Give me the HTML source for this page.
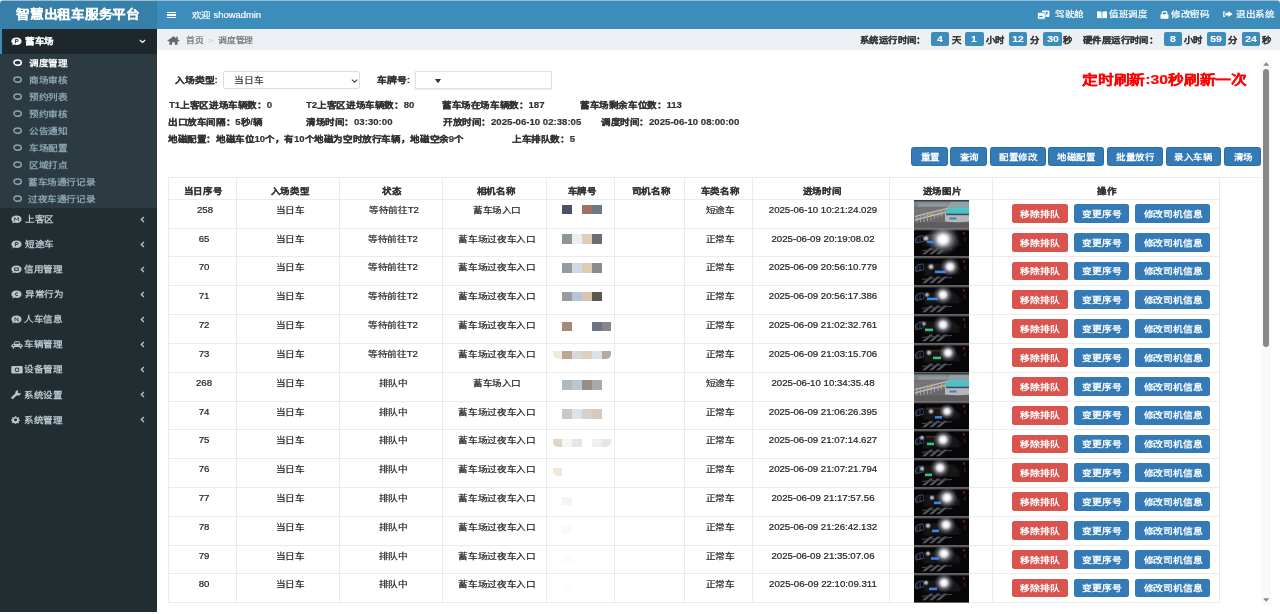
<!DOCTYPE html>
<html lang="zh-CN"><head><meta charset="utf-8"><title>调度管理</title>
<style>
*{box-sizing:border-box;margin:0;padding:0}
html,body{width:1280px;height:614px;overflow:hidden;background:#fff}
body{position:relative;font-family:"Liberation Sans",sans-serif;color:#333}
.abs{position:absolute}
.tx{position:absolute;height:20px;line-height:20px;white-space:nowrap}
</style></head><body>
<svg width="0" height="0" style="position:absolute"><defs><radialGradient id="hl"><stop offset="0" stop-color="#fff"/><stop offset="0.35" stop-color="#dcdce4"/><stop offset="0.65" stop-color="#8a8a98" stop-opacity="0.6"/><stop offset="1" stop-color="#505060" stop-opacity="0"/></radialGradient><filter id="b05" x="-20%" y="-20%" width="140%" height="140%"><feGaussianBlur stdDeviation="0.45"/></filter><filter id="b1" x="-50%" y="-50%" width="200%" height="200%"><feGaussianBlur stdDeviation="1"/></filter></defs></svg>
<div class="abs" style="left:0;top:0;width:157px;height:29px;background:#367fa9"></div>
<div class="abs" style="left:157px;top:0;width:1123px;height:29px;background:#3c8dbc"></div>
<div class="abs" style="left:0;top:0;width:1280px;height:1px;background:#9bbbd0"></div>
<div class="abs" style="left:167px;top:11.8px;width:9px;height:1.4px;background:#fff"></div>
<div class="abs" style="left:167px;top:14.2px;width:9px;height:1.4px;background:#fff"></div>
<div class="abs" style="left:167px;top:16.6px;width:9px;height:1.4px;background:#fff"></div>
<svg class="abs" style="left:1037px;top:10px" width="13" height="10" viewBox="0 0 13 10"><rect x="5" y="0.6" width="7.4" height="6.4" rx="1" fill="#fff"/><rect x="9" y="1.8" width="1.6" height="2.6" fill="#3c8dbc"/><rect x="0.6" y="2.6" width="7.6" height="6.6" rx="1" fill="#fff" stroke="#3c8dbc" stroke-width="0.7"/><rect x="2.2" y="5.9" width="3.4" height="1.2" fill="#3c8dbc"/></svg>
<svg class="abs" style="left:1097px;top:11px" width="10" height="8" viewBox="0 0 10 8"><path d="M0 0.5 Q2.5 0 4.6 0.8 L4.6 7.3 Q2.5 6.6 0 7.2 Z M5.4 0.8 Q7.5 0 10 0.5 L10 7.2 Q7.5 6.6 5.4 7.3 Z" fill="#fff"/></svg>
<svg class="abs" style="left:1159.8px;top:10.8px" width="9" height="8" viewBox="0 0 9 8"><path d="M2.1 3.6 V2.7 A2.4 2.4 0 0 1 6.9 2.7 V3.6" fill="none" stroke="#fff" stroke-width="1.3"/><rect x="0.5" y="3.3" width="8" height="4.4" rx="0.8" fill="#fff"/></svg>
<svg class="abs" style="left:1222.7px;top:11.4px" width="10" height="6.2" viewBox="0 0 10 6.2"><path d="M0.2 0.2 H2.2 V1.1 H1.4 V5.1 H2.2 V6 H0.2 Z" fill="#fff"/><path d="M2.4 1.8 H5.4 V0.1 L9.6 3.1 L5.4 6.1 V4.4 H2.4 Z" fill="#fff"/></svg>
<svg class="abs" style="left:0;top:0" width="4" height="4"><path d="M0 0 H4 Q0 0 0 4 Z" fill="#fff"/></svg>
<svg class="abs" style="left:1276px;top:0" width="4" height="4"><path d="M0 0 H4 V4 Q4 0 0 0 Z" fill="#fff"/></svg>
<div class="abs" style="left:0;top:29px;width:157px;height:583px;background:#222d32"></div>
<div class="abs" style="left:0;top:29px;width:157px;height:25px;background:#1e282c"></div>
<div class="abs" style="left:0;top:29px;width:1.5px;height:25px;background:#3c8dbc"></div>
<div class="abs" style="left:0;top:54px;width:157px;height:154px;background:#2c3b41"></div>
<svg class="abs" style="left:10.6px;top:37.0px" width="11" height="9" viewBox="0 0 11 9"><path d="M5.5 0.5 C8.6 0.5 10.6 2 10.6 4.2 C10.6 6.4 8.6 7.9 5.5 7.9 C4.8 7.9 4.1 7.8 3.5 7.6 L1.2 8.5 L1.9 6.8 C0.9 6.1 0.4 5.2 0.4 4.2 C0.4 2 2.4 0.5 5.5 0.5 Z" fill="#fff"/><path d="M4.4 6.2 V2.4 H6 Q7.2 2.4 7.2 3.4 Q7.2 4.4 6 4.4 H4.4" fill="none" stroke="#1e282c" stroke-width="0.9"/></svg>
<svg class="abs" style="left:138.8px;top:39px" width="7" height="5" viewBox="0 0 7 5"><path d="M0.9 1 L3.5 3.4 L6.1 1" fill="none" stroke="#fff" stroke-width="1.2"/></svg>
<svg class="abs" style="left:13px;top:58.90px" width="9.2" height="7.2" viewBox="0 0 9.2 7.2"><ellipse cx="4.6" cy="3.6" rx="3.65" ry="2.65" fill="none" stroke="#fff" stroke-width="1.55"/></svg>
<svg class="abs" style="left:13px;top:75.90px" width="9.2" height="7.2" viewBox="0 0 9.2 7.2"><ellipse cx="4.6" cy="3.6" rx="3.65" ry="2.65" fill="none" stroke="#8aa4af" stroke-width="1.55"/></svg>
<svg class="abs" style="left:13px;top:92.90px" width="9.2" height="7.2" viewBox="0 0 9.2 7.2"><ellipse cx="4.6" cy="3.6" rx="3.65" ry="2.65" fill="none" stroke="#8aa4af" stroke-width="1.55"/></svg>
<svg class="abs" style="left:13px;top:109.90px" width="9.2" height="7.2" viewBox="0 0 9.2 7.2"><ellipse cx="4.6" cy="3.6" rx="3.65" ry="2.65" fill="none" stroke="#8aa4af" stroke-width="1.55"/></svg>
<svg class="abs" style="left:13px;top:126.90px" width="9.2" height="7.2" viewBox="0 0 9.2 7.2"><ellipse cx="4.6" cy="3.6" rx="3.65" ry="2.65" fill="none" stroke="#8aa4af" stroke-width="1.55"/></svg>
<svg class="abs" style="left:13px;top:143.90px" width="9.2" height="7.2" viewBox="0 0 9.2 7.2"><ellipse cx="4.6" cy="3.6" rx="3.65" ry="2.65" fill="none" stroke="#8aa4af" stroke-width="1.55"/></svg>
<svg class="abs" style="left:13px;top:160.90px" width="9.2" height="7.2" viewBox="0 0 9.2 7.2"><ellipse cx="4.6" cy="3.6" rx="3.65" ry="2.65" fill="none" stroke="#8aa4af" stroke-width="1.55"/></svg>
<svg class="abs" style="left:13px;top:177.90px" width="9.2" height="7.2" viewBox="0 0 9.2 7.2"><ellipse cx="4.6" cy="3.6" rx="3.65" ry="2.65" fill="none" stroke="#8aa4af" stroke-width="1.55"/></svg>
<svg class="abs" style="left:13px;top:194.90px" width="9.2" height="7.2" viewBox="0 0 9.2 7.2"><ellipse cx="4.6" cy="3.6" rx="3.65" ry="2.65" fill="none" stroke="#8aa4af" stroke-width="1.55"/></svg>
<svg class="abs" style="left:10.6px;top:215.3px" width="11" height="9" viewBox="0 0 11 9"><path d="M5.5 0.5 C8.6 0.5 10.6 2 10.6 4.2 C10.6 6.4 8.6 7.9 5.5 7.9 C4.8 7.9 4.1 7.8 3.5 7.6 L1.2 8.5 L1.9 6.8 C0.9 6.1 0.4 5.2 0.4 4.2 C0.4 2 2.4 0.5 5.5 0.5 Z" fill="#b8c7ce"/><path d="M3.6 6 V2.6 L5.5 4.6 L7.4 2.6 V6" fill="none" stroke="#222d32" stroke-width="0.8"/></svg>
<svg class="abs" style="left:139.5px;top:216.1px" width="5" height="7" viewBox="0 0 5 7"><path d="M3.9 1 L1.3 3.5 L3.9 6" fill="none" stroke="#b8c7ce" stroke-width="1.3"/></svg>
<svg class="abs" style="left:10.6px;top:240.3px" width="11" height="9" viewBox="0 0 11 9"><path d="M5.5 0.5 C8.6 0.5 10.6 2 10.6 4.2 C10.6 6.4 8.6 7.9 5.5 7.9 C4.8 7.9 4.1 7.8 3.5 7.6 L1.2 8.5 L1.9 6.8 C0.9 6.1 0.4 5.2 0.4 4.2 C0.4 2 2.4 0.5 5.5 0.5 Z" fill="#b8c7ce"/><path d="M4.4 6.2 V2.4 H6 Q7.2 2.4 7.2 3.4 Q7.2 4.4 6 4.4 H4.4" fill="none" stroke="#222d32" stroke-width="0.9"/></svg>
<svg class="abs" style="left:139.5px;top:241.1px" width="5" height="7" viewBox="0 0 5 7"><path d="M3.9 1 L1.3 3.5 L3.9 6" fill="none" stroke="#b8c7ce" stroke-width="1.3"/></svg>
<svg class="abs" style="left:10.6px;top:265.3px" width="11" height="9" viewBox="0 0 11 9"><path d="M5.5 0.5 C8.6 0.5 10.6 2 10.6 4.2 C10.6 6.4 8.6 7.9 5.5 7.9 C4.8 7.9 4.1 7.8 3.5 7.6 L1.2 8.5 L1.9 6.8 C0.9 6.1 0.4 5.2 0.4 4.2 C0.4 2 2.4 0.5 5.5 0.5 Z" fill="#b8c7ce"/><rect x="3.6" y="3" width="3.8" height="2.4" fill="none" stroke="#222d32" stroke-width="0.9"/></svg>
<svg class="abs" style="left:139.5px;top:266.1px" width="5" height="7" viewBox="0 0 5 7"><path d="M3.9 1 L1.3 3.5 L3.9 6" fill="none" stroke="#b8c7ce" stroke-width="1.3"/></svg>
<svg class="abs" style="left:10.6px;top:290.4px" width="11" height="9" viewBox="0 0 11 9"><path d="M5.5 0.5 C8.6 0.5 10.6 2 10.6 4.2 C10.6 6.4 8.6 7.9 5.5 7.9 C4.8 7.9 4.1 7.8 3.5 7.6 L1.2 8.5 L1.9 6.8 C0.9 6.1 0.4 5.2 0.4 4.2 C0.4 2 2.4 0.5 5.5 0.5 Z" fill="#b8c7ce"/><path d="M7 3 Q4.2 2.2 4.2 4.3 Q4.2 6.2 7 5.6" fill="none" stroke="#222d32" stroke-width="0.9"/></svg>
<svg class="abs" style="left:139.5px;top:291.2px" width="5" height="7" viewBox="0 0 5 7"><path d="M3.9 1 L1.3 3.5 L3.9 6" fill="none" stroke="#b8c7ce" stroke-width="1.3"/></svg>
<svg class="abs" style="left:10.6px;top:315.4px" width="11" height="9" viewBox="0 0 11 9"><path d="M5.5 0.5 C8.6 0.5 10.6 2 10.6 4.2 C10.6 6.4 8.6 7.9 5.5 7.9 C4.8 7.9 4.1 7.8 3.5 7.6 L1.2 8.5 L1.9 6.8 C0.9 6.1 0.4 5.2 0.4 4.2 C0.4 2 2.4 0.5 5.5 0.5 Z" fill="#b8c7ce"/><path d="M4 6.2 V2.5 L7 6.2 V2.5" fill="none" stroke="#222d32" stroke-width="0.8"/></svg>
<svg class="abs" style="left:139.5px;top:316.2px" width="5" height="7" viewBox="0 0 5 7"><path d="M3.9 1 L1.3 3.5 L3.9 6" fill="none" stroke="#b8c7ce" stroke-width="1.3"/></svg>
<svg class="abs" style="left:10.5px;top:340.7px" width="12" height="8" viewBox="0 0 12 8"><path d="M2.4 3 L3.4 0.8 Q3.7 0.3 4.3 0.3 H7.7 Q8.3 0.3 8.6 0.8 L9.6 3 Q11.6 3.3 11.6 4.6 V6 H10.4 V7.6 H8.6 V6 H3.4 V7.6 H1.6 V6 H0.4 V4.6 Q0.4 3.3 2.4 3 Z" fill="#b8c7ce"/><path d="M3.4 2.8 L4.1 1.2 H7.9 L8.6 2.8 Z" fill="#222d32"/><circle cx="2.6" cy="4.5" r="0.8" fill="#222d32"/><circle cx="9.4" cy="4.5" r="0.8" fill="#222d32"/></svg>
<svg class="abs" style="left:139.5px;top:341.2px" width="5" height="7" viewBox="0 0 5 7"><path d="M3.9 1 L1.3 3.5 L3.9 6" fill="none" stroke="#b8c7ce" stroke-width="1.3"/></svg>
<svg class="abs" style="left:10.8px;top:365.1px" width="12" height="9" viewBox="0 0 12 9"><rect x="0.3" y="1" width="11.4" height="7.6" rx="1" fill="#b8c7ce"/><circle cx="6" cy="4.8" r="2.3" fill="#222d32"/><circle cx="6" cy="4.8" r="1.4" fill="#b8c7ce"/></svg>
<svg class="abs" style="left:139.5px;top:366.2px" width="5" height="7" viewBox="0 0 5 7"><path d="M3.9 1 L1.3 3.5 L3.9 6" fill="none" stroke="#b8c7ce" stroke-width="1.3"/></svg>
<svg class="abs" style="left:10.8px;top:390.4px" width="10" height="9" viewBox="0 0 10 9"><path d="M1.4 7.8 L5.6 3.9" stroke="#b8c7ce" stroke-width="2.3" stroke-linecap="round"/><circle cx="7" cy="2.9" r="2.7" fill="#b8c7ce"/><path d="M7.2 -0.5 L10.5 2.2 L8.6 3.6 L6.8 2.4 Z" fill="#222d32"/></svg>
<svg class="abs" style="left:139.5px;top:391.2px" width="5" height="7" viewBox="0 0 5 7"><path d="M3.9 1 L1.3 3.5 L3.9 6" fill="none" stroke="#b8c7ce" stroke-width="1.3"/></svg>
<svg class="abs" style="left:10.9px;top:416.0px" width="9" height="8" viewBox="0 0 9 8"><g transform="scale(1,0.86)"><path d="M3.8 0.3 H5.2 L5.5 1.5 L6.4 1.9 L7.5 1.2 L8.3 2.2 L7.6 3.2 L7.9 4.1 L8.9 4.3 V5.7 L7.9 5.9 L7.5 6.8 L8.1 7.8 L7.1 8.6 L6.2 8 L5.3 8.4 L5.1 8.9 H3.7 L3.5 8.3 L2.6 7.9 L1.7 8.5 L0.7 7.6 L1.3 6.7 L1 5.8 L0.1 5.6 V4.2 L1.1 4 L1.5 3.1 L0.9 2.2 L1.8 1.3 L2.7 1.9 L3.6 1.5 Z" fill="#b8c7ce"/><circle cx="4.5" cy="4.5" r="1.6" fill="#222d32"/></g></svg>
<svg class="abs" style="left:139.5px;top:416.3px" width="5" height="7" viewBox="0 0 5 7"><path d="M3.9 1 L1.3 3.5 L3.9 6" fill="none" stroke="#b8c7ce" stroke-width="1.3"/></svg>
<div class="abs" style="left:157px;top:29px;width:1123px;height:20.5px;background:#ecf0f5"></div>
<svg class="abs" style="left:167.3px;top:35.6px" width="13" height="9" viewBox="0 0 13 9"><path d="M6.5 0.2 L12.8 4.8 L11.6 5.5 L10.6 4.8 V8.8 H7.9 V6.2 H5.1 V8.8 H2.4 V4.8 L1.4 5.5 L0.2 4.8 Z" fill="#666"/><rect x="9.2" y="0.6" width="1.5" height="2.6" fill="#666"/></svg>
<div class="abs" style="left:931.1px;top:32.1px;width:18.2px;height:13.9px;background:#3c8dbc;border-radius:2px"></div>
<div class="abs" style="left:965.2px;top:32.1px;width:18.5px;height:13.9px;background:#3c8dbc;border-radius:2px"></div>
<div class="abs" style="left:1009.0px;top:32.1px;width:18.0px;height:13.9px;background:#3c8dbc;border-radius:2px"></div>
<div class="abs" style="left:1043.4px;top:32.1px;width:18.4px;height:13.9px;background:#3c8dbc;border-radius:2px"></div>
<div class="abs" style="left:1163.5px;top:32.1px;width:18.5px;height:13.9px;background:#3c8dbc;border-radius:2px"></div>
<div class="abs" style="left:1207.0px;top:32.1px;width:18.9px;height:13.9px;background:#3c8dbc;border-radius:2px"></div>
<div class="abs" style="left:1241.5px;top:32.1px;width:18.8px;height:13.9px;background:#3c8dbc;border-radius:2px"></div>
<div class="abs" style="left:222.5px;top:71px;width:137px;height:18.3px;border:1px solid #dcdcdc;border-radius:2.5px"></div>
<svg class="abs" style="left:350.5px;top:78.5px" width="7" height="4" viewBox="0 0 7 4"><path d="M0.8 0.6 L3.5 3.2 L6.2 0.6" fill="none" stroke="#444" stroke-width="1.1"/></svg>
<div class="abs" style="left:415.3px;top:70.6px;width:137px;height:18.7px;border:1px solid #e0e0e0;box-shadow:0 1px 1px rgba(0,0,0,0.06)"></div>
<svg class="abs" style="left:434.8px;top:78.8px" width="6" height="4.4" viewBox="0 0 6 4.4"><path d="M0 0 H6 L3 4.4 Z" fill="#333"/></svg>
<div class="abs" style="left:910.9px;top:146.8px;width:36.7px;height:19px;background:#337ab7;border:0.6px solid #2e6da4;border-radius:2.5px"></div>
<div class="abs" style="left:950.3px;top:146.8px;width:36.5px;height:19px;background:#337ab7;border:0.6px solid #2e6da4;border-radius:2.5px"></div>
<div class="abs" style="left:990.1px;top:146.8px;width:55.5px;height:19px;background:#337ab7;border:0.6px solid #2e6da4;border-radius:2.5px"></div>
<div class="abs" style="left:1048.2px;top:146.8px;width:55.4px;height:19px;background:#337ab7;border:0.6px solid #2e6da4;border-radius:2.5px"></div>
<div class="abs" style="left:1107.0px;top:146.8px;width:55.5px;height:19px;background:#337ab7;border:0.6px solid #2e6da4;border-radius:2.5px"></div>
<div class="abs" style="left:1165.5px;top:146.8px;width:55.3px;height:19px;background:#337ab7;border:0.6px solid #2e6da4;border-radius:2.5px"></div>
<div class="abs" style="left:1224.1px;top:146.8px;width:36.5px;height:19px;background:#337ab7;border:0.6px solid #2e6da4;border-radius:2.5px"></div>
<div class="abs" style="left:168px;top:177px;width:1093px;height:1px;background:#ebebeb"></div>
<div class="abs" style="left:168px;top:199px;width:1052px;height:1px;background:#ebebeb"></div>
<div class="abs" style="left:168px;top:228px;width:1052px;height:1px;background:#ebebeb"></div>
<div class="abs" style="left:168px;top:256px;width:1052px;height:1px;background:#ebebeb"></div>
<div class="abs" style="left:168px;top:285px;width:1052px;height:1px;background:#ebebeb"></div>
<div class="abs" style="left:168px;top:314px;width:1052px;height:1px;background:#ebebeb"></div>
<div class="abs" style="left:168px;top:343px;width:1052px;height:1px;background:#ebebeb"></div>
<div class="abs" style="left:168px;top:372px;width:1052px;height:1px;background:#ebebeb"></div>
<div class="abs" style="left:168px;top:401px;width:1052px;height:1px;background:#ebebeb"></div>
<div class="abs" style="left:168px;top:429px;width:1052px;height:1px;background:#ebebeb"></div>
<div class="abs" style="left:168px;top:458px;width:1052px;height:1px;background:#ebebeb"></div>
<div class="abs" style="left:168px;top:487px;width:1052px;height:1px;background:#ebebeb"></div>
<div class="abs" style="left:168px;top:516px;width:1052px;height:1px;background:#ebebeb"></div>
<div class="abs" style="left:168px;top:545px;width:1052px;height:1px;background:#ebebeb"></div>
<div class="abs" style="left:168px;top:573px;width:1052px;height:1px;background:#ebebeb"></div>
<div class="abs" style="left:168px;top:602px;width:1052px;height:1px;background:#ebebeb"></div>
<div class="abs" style="left:168px;top:177px;width:1px;height:426px;background:#ebebeb"></div>
<div class="abs" style="left:236px;top:177px;width:1px;height:426px;background:#ebebeb"></div>
<div class="abs" style="left:339px;top:177px;width:1px;height:426px;background:#ebebeb"></div>
<div class="abs" style="left:442px;top:177px;width:1px;height:426px;background:#ebebeb"></div>
<div class="abs" style="left:546px;top:177px;width:1px;height:426px;background:#ebebeb"></div>
<div class="abs" style="left:614px;top:177px;width:1px;height:426px;background:#ebebeb"></div>
<div class="abs" style="left:684px;top:177px;width:1px;height:426px;background:#ebebeb"></div>
<div class="abs" style="left:752px;top:177px;width:1px;height:426px;background:#ebebeb"></div>
<div class="abs" style="left:889px;top:177px;width:1px;height:426px;background:#ebebeb"></div>
<div class="abs" style="left:992px;top:177px;width:1px;height:426px;background:#ebebeb"></div>
<div class="abs" style="left:1219px;top:177px;width:1px;height:426px;background:#ebebeb"></div>
<div class="abs" style="left:562px;top:205.0px;width:10px;height:9.0px;background:#4a5164"></div>
<div class="abs" style="left:582px;top:205.0px;width:10px;height:9.0px;background:#9a7565"></div>
<div class="abs" style="left:592px;top:205.0px;width:10px;height:9.0px;background:#6b7985"></div>
<svg class="abs" style="left:914px;top:200.0px" width="55" height="28.6" viewBox="0 0 55 29.4" preserveAspectRatio="none"><rect width="55" height="29.4" fill="#6a6a6c"/><rect y="1.3" width="55" height="6" fill="#7a8088"/><rect x="4" y="3.5" width="30" height="3" fill="#9aa0a8" filter="url(#b1)"/><path d="M0 9 L55 6 L55 14 L0 19 Z" fill="#767474"/><g filter="url(#b05)"><path d="M1 17 L34 8.5 M1 20.5 L34 12" stroke="#c8c8cc" stroke-width="1.2"/><path d="M3 15.5 V25 M6.5 14.5 V24 M10 13.5 V23 M13.5 12.6 V22 M17 11.7 V21 M20.5 10.8 V19.5 M24 10 V18 M27.5 9.5 V17 M31 9 V15" stroke="#a8a8b0" stroke-width="0.9"/><path d="M12 16 L19 14.5 M26 13 L31 12" stroke="#c8a040" stroke-width="1.1"/></g><rect y="23" width="55" height="6.4" fill="#5e5c5c"/><g filter="url(#b05)"><path d="M31 14 L33 8.5 L36 3 Q37 2 39 2 L53 2 Q55 2 55 4 L55 22 Q44 23.5 31 22 Z" fill="#b4b8bc"/><path d="M36 3 Q37 2 39 2 L53 2 Q55 2 55 4 L55 8.5 L33.5 8.5 Z" fill="#8aa4aa"/><path d="M33.5 8.5 L55 8.5 L55 14 L31 14 Z" fill="#42c6ca"/><rect x="32" y="14" width="23" height="1.6" fill="#40484e"/><rect x="35.5" y="18" width="7" height="2" fill="#3a82c0"/></g><rect width="55" height="1.4" fill="#3a3c40"/></svg>
<div class="abs" style="left:1012.1px;top:204.10px;width:55.8px;height:18.8px;background:#d9534f;border-radius:2.5px"></div>
<div class="abs" style="left:1073.7px;top:204.10px;width:55.8px;height:18.8px;background:#337ab7;border-radius:2.5px"></div>
<div class="abs" style="left:1135.1px;top:204.10px;width:75px;height:18.8px;background:#337ab7;border-radius:2.5px"></div>
<div class="abs" style="left:562px;top:233.9px;width:10px;height:9.8px;background:#8e9597"></div>
<div class="abs" style="left:572px;top:233.9px;width:10px;height:9.8px;background:#eceef2"></div>
<div class="abs" style="left:582px;top:233.9px;width:10px;height:9.8px;background:#e0cdb5"></div>
<div class="abs" style="left:592px;top:233.9px;width:10px;height:9.8px;background:#6d6c74"></div>
<svg class="abs" style="left:914px;top:229.0px" width="55" height="27.6" viewBox="0 0 55 29.4" preserveAspectRatio="none"><rect width="55" height="29.4" fill="#070709"/><rect width="55" height="1.4" fill="#5a5a5a"/><rect x="12" y="6" width="26" height="3" fill="#8a5a24" opacity="0.8" filter="url(#b05)"/><g filter="url(#b05)"><path d="M1 11 L4 8 L9 7 L10 13 L2 15 Z" fill="none" stroke="#56648a" stroke-width="0.8"/><path d="M3 9 V14 M6 8.5 V14" stroke="#56648a" stroke-width="0.7"/></g><path d="M10 7 L40 6 L46 12 L46 18 L10 19 Z" fill="#121216" filter="url(#b1)"/><circle cx="29" cy="11" r="17.0" fill="url(#hl)" opacity="0.85"/><circle cx="29" cy="11" r="5.0" fill="#fff" opacity="1.0" filter="url(#b1)"/><circle cx="12" cy="10" r="4.25" fill="url(#hl)" opacity="0.68"/><circle cx="12" cy="10" r="1.25" fill="#fff" opacity="0.8" filter="url(#b1)"/><rect x="13" y="12.5" width="8" height="2.6" fill="#3a7fe0" filter="url(#b05)"/><path d="M8 27 L16 20 L19.5 20 L11.5 27 Z M15 27 L23 20 L26.5 20 L18.5 27 Z M22 27 L30 20 L33.5 20 L25.5 27 Z" fill="#55575f" filter="url(#b05)"/><path d="M8 23 L38 21" stroke="#44464f" stroke-width="1"/><rect x="49" y="3" width="2" height="3" fill="#6a1420" filter="url(#b05)"/><rect x="50" y="9" width="1.6" height="4" fill="#501018" filter="url(#b05)"/></svg>
<div class="abs" style="left:1012.1px;top:233.20px;width:55.8px;height:18.8px;background:#d9534f;border-radius:2.5px"></div>
<div class="abs" style="left:1073.7px;top:233.20px;width:55.8px;height:18.8px;background:#337ab7;border-radius:2.5px"></div>
<div class="abs" style="left:1135.1px;top:233.20px;width:75px;height:18.8px;background:#337ab7;border-radius:2.5px"></div>
<div class="abs" style="left:562px;top:263.1px;width:10px;height:9.5px;background:#959c9e"></div>
<div class="abs" style="left:572px;top:263.1px;width:10px;height:9.5px;background:#d3dae2"></div>
<div class="abs" style="left:582px;top:263.1px;width:10px;height:9.5px;background:#dfcbb3"></div>
<div class="abs" style="left:592px;top:263.1px;width:10px;height:9.5px;background:#8c8b8a"></div>
<svg class="abs" style="left:914px;top:257.0px" width="55" height="28.6" viewBox="0 0 55 29.4" preserveAspectRatio="none"><rect width="55" height="29.4" fill="#070709"/><rect width="55" height="1.4" fill="#5a5a5a"/><g filter="url(#b05)"><path d="M1 11 L4 8 L9 7 L10 13 L2 15 Z" fill="none" stroke="#56648a" stroke-width="0.8"/><path d="M3 9 V14 M6 8.5 V14" stroke="#56648a" stroke-width="0.7"/></g><path d="M10 7 L40 6 L46 12 L46 18 L10 19 Z" fill="#121216" filter="url(#b1)"/><circle cx="36" cy="10" r="10.2" fill="url(#hl)" opacity="0.85"/><circle cx="36" cy="10" r="3.0" fill="#fff" opacity="1.0" filter="url(#b1)"/><circle cx="17" cy="10" r="4.25" fill="url(#hl)" opacity="0.68"/><circle cx="17" cy="10" r="1.25" fill="#fff" opacity="0.8" filter="url(#b1)"/><rect x="21" y="14" width="11" height="2.6" fill="#3a86f0" filter="url(#b05)"/><path d="M8 27 L16 20 L19.5 20 L11.5 27 Z M15 27 L23 20 L26.5 20 L18.5 27 Z M22 27 L30 20 L33.5 20 L25.5 27 Z" fill="#55575f" filter="url(#b05)"/><path d="M8 23 L38 21" stroke="#44464f" stroke-width="1"/><rect x="49" y="3" width="2" height="3" fill="#6a1420" filter="url(#b05)"/><rect x="50" y="9" width="1.6" height="4" fill="#501018" filter="url(#b05)"/></svg>
<div class="abs" style="left:1012.1px;top:261.60px;width:55.8px;height:18.8px;background:#d9534f;border-radius:2.5px"></div>
<div class="abs" style="left:1073.7px;top:261.60px;width:55.8px;height:18.8px;background:#337ab7;border-radius:2.5px"></div>
<div class="abs" style="left:1135.1px;top:261.60px;width:75px;height:18.8px;background:#337ab7;border-radius:2.5px"></div>
<div class="abs" style="left:562px;top:291.8px;width:10px;height:9.5px;background:#9a9ca0"></div>
<div class="abs" style="left:572px;top:291.8px;width:10px;height:9.5px;background:#b5c4d6"></div>
<div class="abs" style="left:582px;top:291.8px;width:10px;height:9.5px;background:#dbc5ae"></div>
<div class="abs" style="left:592px;top:291.8px;width:10px;height:9.5px;background:#5c584f"></div>
<svg class="abs" style="left:914px;top:286.0px" width="55" height="28.6" viewBox="0 0 55 29.4" preserveAspectRatio="none"><rect width="55" height="29.4" fill="#070709"/><rect width="55" height="1.4" fill="#5a5a5a"/><g filter="url(#b05)"><path d="M1 11 L4 8 L9 7 L10 13 L2 15 Z" fill="none" stroke="#56648a" stroke-width="0.8"/><path d="M3 9 V14 M6 8.5 V14" stroke="#56648a" stroke-width="0.7"/></g><path d="M10 7 L40 6 L46 12 L46 18 L10 19 Z" fill="#121216" filter="url(#b1)"/><circle cx="29" cy="9" r="10.2" fill="url(#hl)" opacity="0.85"/><circle cx="29" cy="9" r="3.0" fill="#fff" opacity="1.0" filter="url(#b1)"/><circle cx="13" cy="9" r="3.4" fill="url(#hl)" opacity="0.595"/><circle cx="13" cy="9" r="1.0" fill="#fff" opacity="0.7" filter="url(#b1)"/><rect x="13" y="12" width="11" height="2.6" fill="#3a86f0" filter="url(#b05)"/><path d="M8 27 L16 20 L19.5 20 L11.5 27 Z M15 27 L23 20 L26.5 20 L18.5 27 Z M22 27 L30 20 L33.5 20 L25.5 27 Z" fill="#55575f" filter="url(#b05)"/><path d="M8 23 L38 21" stroke="#44464f" stroke-width="1"/><rect x="49" y="3" width="2" height="3" fill="#6a1420" filter="url(#b05)"/><rect x="50" y="9" width="1.6" height="4" fill="#501018" filter="url(#b05)"/></svg>
<div class="abs" style="left:1012.1px;top:290.40px;width:55.8px;height:18.8px;background:#d9534f;border-radius:2.5px"></div>
<div class="abs" style="left:1073.7px;top:290.40px;width:55.8px;height:18.8px;background:#337ab7;border-radius:2.5px"></div>
<div class="abs" style="left:1135.1px;top:290.40px;width:75px;height:18.8px;background:#337ab7;border-radius:2.5px"></div>
<div class="abs" style="left:562px;top:322.1px;width:10px;height:8.8px;background:#a48b78"></div>
<div class="abs" style="left:592px;top:322.1px;width:10px;height:8.8px;background:#6b7583"></div>
<div class="abs" style="left:602px;top:322.1px;width:9px;height:8.8px;background:#87858b"></div>
<svg class="abs" style="left:914px;top:315.0px" width="55" height="28.6" viewBox="0 0 55 29.4" preserveAspectRatio="none"><rect width="55" height="29.4" fill="#070709"/><rect width="55" height="1.4" fill="#5a5a5a"/><g filter="url(#b05)"><path d="M1 11 L4 8 L9 7 L10 13 L2 15 Z" fill="none" stroke="#56648a" stroke-width="0.8"/><path d="M3 9 V14 M6 8.5 V14" stroke="#56648a" stroke-width="0.7"/></g><path d="M10 7 L40 6 L46 12 L46 18 L10 19 Z" fill="#121216" filter="url(#b1)"/><circle cx="29" cy="10" r="10.2" fill="url(#hl)" opacity="0.85"/><circle cx="29" cy="10" r="3.0" fill="#fff" opacity="1.0" filter="url(#b1)"/><circle cx="10" cy="9" r="3.4" fill="url(#hl)" opacity="0.51"/><circle cx="10" cy="9" r="1.0" fill="#fff" opacity="0.6" filter="url(#b1)"/><rect x="11" y="14" width="8" height="2.6" fill="#40c080" filter="url(#b05)"/><path d="M8 27 L16 20 L19.5 20 L11.5 27 Z M15 27 L23 20 L26.5 20 L18.5 27 Z M22 27 L30 20 L33.5 20 L25.5 27 Z" fill="#55575f" filter="url(#b05)"/><path d="M8 23 L38 21" stroke="#44464f" stroke-width="1"/><rect x="49" y="3" width="2" height="3" fill="#6a1420" filter="url(#b05)"/><rect x="50" y="9" width="1.6" height="4" fill="#501018" filter="url(#b05)"/></svg>
<div class="abs" style="left:1012.1px;top:319.20px;width:55.8px;height:18.8px;background:#d9534f;border-radius:2.5px"></div>
<div class="abs" style="left:1073.7px;top:319.20px;width:55.8px;height:18.8px;background:#337ab7;border-radius:2.5px"></div>
<div class="abs" style="left:1135.1px;top:319.20px;width:75px;height:18.8px;background:#337ab7;border-radius:2.5px"></div>
<div class="abs" style="left:553px;top:351.1px;width:9px;height:7.5px;background:#f3ebe0;border-bottom-left-radius:5px"></div>
<div class="abs" style="left:562px;top:351.1px;width:10px;height:7.5px;background:#bba998"></div>
<div class="abs" style="left:572px;top:351.1px;width:10px;height:7.5px;background:#d8d8d6"></div>
<div class="abs" style="left:582px;top:351.1px;width:10px;height:7.5px;background:#dfcfbb"></div>
<div class="abs" style="left:592px;top:351.1px;width:10px;height:7.5px;background:#dde0e5"></div>
<div class="abs" style="left:602px;top:351.1px;width:9px;height:7.5px;background:#b5a89c;border-bottom-right-radius:5px"></div>
<svg class="abs" style="left:914px;top:344.0px" width="55" height="28.6" viewBox="0 0 55 29.4" preserveAspectRatio="none"><rect width="55" height="29.4" fill="#070709"/><rect width="55" height="1.4" fill="#5a5a5a"/><rect x="12" y="6" width="26" height="3" fill="#8a5a24" opacity="0.8" filter="url(#b05)"/><g filter="url(#b05)"><path d="M1 11 L4 8 L9 7 L10 13 L2 15 Z" fill="none" stroke="#56648a" stroke-width="0.8"/><path d="M3 9 V14 M6 8.5 V14" stroke="#56648a" stroke-width="0.7"/></g><path d="M10 7 L40 6 L46 12 L46 18 L10 19 Z" fill="#121216" filter="url(#b1)"/><circle cx="34" cy="9" r="9.35" fill="url(#hl)" opacity="0.85"/><circle cx="34" cy="9" r="2.75" fill="#fff" opacity="1.0" filter="url(#b1)"/><circle cx="15" cy="9" r="3.74" fill="url(#hl)" opacity="0.68"/><circle cx="15" cy="9" r="1.1" fill="#fff" opacity="0.8" filter="url(#b1)"/><rect x="19" y="13" width="8" height="2.6" fill="#40c080" filter="url(#b05)"/><path d="M8 27 L16 20 L19.5 20 L11.5 27 Z M15 27 L23 20 L26.5 20 L18.5 27 Z M22 27 L30 20 L33.5 20 L25.5 27 Z" fill="#55575f" filter="url(#b05)"/><path d="M8 23 L38 21" stroke="#44464f" stroke-width="1"/><rect x="49" y="3" width="2" height="3" fill="#6a1420" filter="url(#b05)"/><rect x="50" y="9" width="1.6" height="4" fill="#501018" filter="url(#b05)"/></svg>
<div class="abs" style="left:1012.1px;top:348.10px;width:55.8px;height:18.8px;background:#d9534f;border-radius:2.5px"></div>
<div class="abs" style="left:1073.7px;top:348.10px;width:55.8px;height:18.8px;background:#337ab7;border-radius:2.5px"></div>
<div class="abs" style="left:1135.1px;top:348.10px;width:75px;height:18.8px;background:#337ab7;border-radius:2.5px"></div>
<div class="abs" style="left:562px;top:380.0px;width:10px;height:9.8px;background:#b3b8bc"></div>
<div class="abs" style="left:572px;top:380.0px;width:10px;height:9.8px;background:#b9c7d5"></div>
<div class="abs" style="left:582px;top:380.0px;width:10px;height:9.8px;background:#9a8c80"></div>
<div class="abs" style="left:592px;top:380.0px;width:10px;height:9.8px;background:#a9a9a9"></div>
<svg class="abs" style="left:914px;top:373.0px" width="55" height="28.6" viewBox="0 0 55 29.4" preserveAspectRatio="none"><rect width="55" height="29.4" fill="#6a6a6c"/><rect y="1.3" width="55" height="6" fill="#7a8088"/><rect x="4" y="3.5" width="30" height="3" fill="#9aa0a8" filter="url(#b1)"/><path d="M0 9 L55 6 L55 14 L0 19 Z" fill="#767474"/><g filter="url(#b05)"><path d="M1 17 L34 8.5 M1 20.5 L34 12" stroke="#c8c8cc" stroke-width="1.2"/><path d="M3 15.5 V25 M6.5 14.5 V24 M10 13.5 V23 M13.5 12.6 V22 M17 11.7 V21 M20.5 10.8 V19.5 M24 10 V18 M27.5 9.5 V17 M31 9 V15" stroke="#a8a8b0" stroke-width="0.9"/><path d="M12 16 L19 14.5 M26 13 L31 12" stroke="#c8a040" stroke-width="1.1"/></g><rect y="23" width="55" height="6.4" fill="#5e5c5c"/><g filter="url(#b05)"><path d="M31 14 L33 8.5 L36 3 Q37 2 39 2 L53 2 Q55 2 55 4 L55 22 Q44 23.5 31 22 Z" fill="#b4b8bc"/><path d="M36 3 Q37 2 39 2 L53 2 Q55 2 55 4 L55 8.5 L33.5 8.5 Z" fill="#8aa4aa"/><path d="M33.5 8.5 L55 8.5 L55 14 L31 14 Z" fill="#42c6ca"/><rect x="32" y="14" width="23" height="1.6" fill="#40484e"/><rect x="35.5" y="18" width="7" height="2" fill="#3a82c0"/></g><rect width="55" height="1.4" fill="#3a3c40"/></svg>
<div class="abs" style="left:1012.1px;top:377.20px;width:55.8px;height:18.8px;background:#d9534f;border-radius:2.5px"></div>
<div class="abs" style="left:1073.7px;top:377.20px;width:55.8px;height:18.8px;background:#337ab7;border-radius:2.5px"></div>
<div class="abs" style="left:1135.1px;top:377.20px;width:75px;height:18.8px;background:#337ab7;border-radius:2.5px"></div>
<div class="abs" style="left:562px;top:409.0px;width:10px;height:9.8px;background:#c8c8c8"></div>
<div class="abs" style="left:572px;top:409.0px;width:10px;height:9.8px;background:#dde3ea"></div>
<div class="abs" style="left:582px;top:409.0px;width:10px;height:9.8px;background:#d8cfcc"></div>
<div class="abs" style="left:592px;top:409.0px;width:10px;height:9.8px;background:#d6c8bd"></div>
<svg class="abs" style="left:914px;top:402.0px" width="55" height="27.6" viewBox="0 0 55 29.4" preserveAspectRatio="none"><rect width="55" height="29.4" fill="#070709"/><rect width="55" height="1.4" fill="#5a5a5a"/><rect x="12" y="6" width="26" height="3" fill="#8a5a24" opacity="0.8" filter="url(#b05)"/><g filter="url(#b05)"><path d="M1 11 L4 8 L9 7 L10 13 L2 15 Z" fill="none" stroke="#56648a" stroke-width="0.8"/><path d="M3 9 V14 M6 8.5 V14" stroke="#56648a" stroke-width="0.7"/></g><path d="M10 7 L40 6 L46 12 L46 18 L10 19 Z" fill="#121216" filter="url(#b1)"/><circle cx="33" cy="10" r="8.5" fill="url(#hl)" opacity="0.85"/><circle cx="33" cy="10" r="2.5" fill="#fff" opacity="1.0" filter="url(#b1)"/><circle cx="17" cy="10" r="3.74" fill="url(#hl)" opacity="0.68"/><circle cx="17" cy="10" r="1.1" fill="#fff" opacity="0.8" filter="url(#b1)"/><rect x="21" y="15" width="7" height="2.6" fill="#3a86f0" filter="url(#b05)"/><path d="M8 27 L16 20 L19.5 20 L11.5 27 Z M15 27 L23 20 L26.5 20 L18.5 27 Z M22 27 L30 20 L33.5 20 L25.5 27 Z" fill="#55575f" filter="url(#b05)"/><path d="M8 23 L38 21" stroke="#44464f" stroke-width="1"/><rect x="49" y="3" width="2" height="3" fill="#6a1420" filter="url(#b05)"/><rect x="50" y="9" width="1.6" height="4" fill="#501018" filter="url(#b05)"/></svg>
<div class="abs" style="left:1012.1px;top:406.00px;width:55.8px;height:18.8px;background:#d9534f;border-radius:2.5px"></div>
<div class="abs" style="left:1073.7px;top:406.00px;width:55.8px;height:18.8px;background:#337ab7;border-radius:2.5px"></div>
<div class="abs" style="left:1135.1px;top:406.00px;width:75px;height:18.8px;background:#337ab7;border-radius:2.5px"></div>
<div class="abs" style="left:553px;top:439.0px;width:9px;height:8.0px;background:#e0d5c8;border-bottom-left-radius:5px"></div>
<div class="abs" style="left:562px;top:439.0px;width:10px;height:8.0px;background:#f8f6f2"></div>
<div class="abs" style="left:572px;top:439.0px;width:10px;height:8.0px;background:#e5e5e7"></div>
<div class="abs" style="left:592px;top:439.0px;width:10px;height:8.0px;background:#efeff2"></div>
<div class="abs" style="left:602px;top:439.0px;width:9px;height:8.0px;background:#e3e5ea;border-bottom-right-radius:5px"></div>
<svg class="abs" style="left:914px;top:430.0px" width="55" height="28.6" viewBox="0 0 55 29.4" preserveAspectRatio="none"><rect width="55" height="29.4" fill="#070709"/><rect width="55" height="1.4" fill="#5a5a5a"/><rect x="12" y="6" width="26" height="3" fill="#8a5a24" opacity="0.8" filter="url(#b05)"/><g filter="url(#b05)"><path d="M1 11 L4 8 L9 7 L10 13 L2 15 Z" fill="none" stroke="#56648a" stroke-width="0.8"/><path d="M3 9 V14 M6 8.5 V14" stroke="#56648a" stroke-width="0.7"/></g><path d="M10 7 L40 6 L46 12 L46 18 L10 19 Z" fill="#121216" filter="url(#b1)"/><circle cx="29" cy="10" r="10.2" fill="url(#hl)" opacity="0.85"/><circle cx="29" cy="10" r="3.0" fill="#fff" opacity="1.0" filter="url(#b1)"/><circle cx="8" cy="8" r="3.4" fill="url(#hl)" opacity="0.595"/><circle cx="8" cy="8" r="1.0" fill="#fff" opacity="0.7" filter="url(#b1)"/><rect x="13" y="13" width="7" height="2.6" fill="#40c080" filter="url(#b05)"/><path d="M8 27 L16 20 L19.5 20 L11.5 27 Z M15 27 L23 20 L26.5 20 L18.5 27 Z M22 27 L30 20 L33.5 20 L25.5 27 Z" fill="#55575f" filter="url(#b05)"/><path d="M8 23 L38 21" stroke="#44464f" stroke-width="1"/><rect x="49" y="3" width="2" height="3" fill="#6a1420" filter="url(#b05)"/><rect x="50" y="9" width="1.6" height="4" fill="#501018" filter="url(#b05)"/></svg>
<div class="abs" style="left:1012.1px;top:434.50px;width:55.8px;height:18.8px;background:#d9534f;border-radius:2.5px"></div>
<div class="abs" style="left:1073.7px;top:434.50px;width:55.8px;height:18.8px;background:#337ab7;border-radius:2.5px"></div>
<div class="abs" style="left:1135.1px;top:434.50px;width:75px;height:18.8px;background:#337ab7;border-radius:2.5px"></div>
<div class="abs" style="left:553px;top:468.0px;width:9px;height:8.0px;background:#efe6dc;border-bottom-left-radius:5px"></div>
<svg class="abs" style="left:914px;top:459.0px" width="55" height="28.6" viewBox="0 0 55 29.4" preserveAspectRatio="none"><rect width="55" height="29.4" fill="#070709"/><rect width="55" height="1.4" fill="#5a5a5a"/><g filter="url(#b05)"><path d="M1 11 L4 8 L9 7 L10 13 L2 15 Z" fill="none" stroke="#56648a" stroke-width="0.8"/><path d="M3 9 V14 M6 8.5 V14" stroke="#56648a" stroke-width="0.7"/></g><path d="M10 7 L40 6 L46 12 L46 18 L10 19 Z" fill="#121216" filter="url(#b1)"/><circle cx="26" cy="9" r="10.2" fill="url(#hl)" opacity="0.85"/><circle cx="26" cy="9" r="3.0" fill="#fff" opacity="1.0" filter="url(#b1)"/><circle cx="8" cy="10" r="3.4" fill="url(#hl)" opacity="0.68"/><circle cx="8" cy="10" r="1.0" fill="#fff" opacity="0.8" filter="url(#b1)"/><rect x="11" y="15" width="7" height="2.6" fill="#40c080" filter="url(#b05)"/><path d="M8 27 L16 20 L19.5 20 L11.5 27 Z M15 27 L23 20 L26.5 20 L18.5 27 Z M22 27 L30 20 L33.5 20 L25.5 27 Z" fill="#55575f" filter="url(#b05)"/><path d="M8 23 L38 21" stroke="#44464f" stroke-width="1"/><rect x="49" y="3" width="2" height="3" fill="#6a1420" filter="url(#b05)"/><rect x="50" y="9" width="1.6" height="4" fill="#501018" filter="url(#b05)"/></svg>
<div class="abs" style="left:1012.1px;top:463.20px;width:55.8px;height:18.8px;background:#d9534f;border-radius:2.5px"></div>
<div class="abs" style="left:1073.7px;top:463.20px;width:55.8px;height:18.8px;background:#337ab7;border-radius:2.5px"></div>
<div class="abs" style="left:1135.1px;top:463.20px;width:75px;height:18.8px;background:#337ab7;border-radius:2.5px"></div>
<div class="abs" style="left:562px;top:496.9px;width:10px;height:8.0px;background:#f7f5f2"></div>
<svg class="abs" style="left:914px;top:488.0px" width="55" height="28.6" viewBox="0 0 55 29.4" preserveAspectRatio="none"><rect width="55" height="29.4" fill="#070709"/><rect width="55" height="1.4" fill="#5a5a5a"/><g filter="url(#b05)"><path d="M1 11 L4 8 L9 7 L10 13 L2 15 Z" fill="none" stroke="#56648a" stroke-width="0.8"/><path d="M3 9 V14 M6 8.5 V14" stroke="#56648a" stroke-width="0.7"/></g><path d="M10 7 L40 6 L46 12 L46 18 L10 19 Z" fill="#121216" filter="url(#b1)"/><circle cx="33" cy="10" r="11.049999999999999" fill="url(#hl)" opacity="0.85"/><circle cx="33" cy="10" r="3.25" fill="#fff" opacity="1.0" filter="url(#b1)"/><circle cx="18" cy="10" r="3.4" fill="url(#hl)" opacity="0.68"/><circle cx="18" cy="10" r="1.0" fill="#fff" opacity="0.8" filter="url(#b1)"/><rect x="20" y="14" width="7" height="2.6" fill="#3a86f0" filter="url(#b05)"/><path d="M8 27 L16 20 L19.5 20 L11.5 27 Z M15 27 L23 20 L26.5 20 L18.5 27 Z M22 27 L30 20 L33.5 20 L25.5 27 Z" fill="#55575f" filter="url(#b05)"/><path d="M8 23 L38 21" stroke="#44464f" stroke-width="1"/><rect x="49" y="3" width="2" height="3" fill="#6a1420" filter="url(#b05)"/><rect x="50" y="9" width="1.6" height="4" fill="#501018" filter="url(#b05)"/></svg>
<div class="abs" style="left:1012.1px;top:492.10px;width:55.8px;height:18.8px;background:#d9534f;border-radius:2.5px"></div>
<div class="abs" style="left:1073.7px;top:492.10px;width:55.8px;height:18.8px;background:#337ab7;border-radius:2.5px"></div>
<div class="abs" style="left:1135.1px;top:492.10px;width:75px;height:18.8px;background:#337ab7;border-radius:2.5px"></div>
<div class="abs" style="left:562px;top:526.0px;width:10px;height:8.0px;background:#fafaf9"></div>
<svg class="abs" style="left:914px;top:517.0px" width="55" height="28.6" viewBox="0 0 55 29.4" preserveAspectRatio="none"><rect width="55" height="29.4" fill="#070709"/><rect width="55" height="1.4" fill="#5a5a5a"/><g filter="url(#b05)"><path d="M1 11 L4 8 L9 7 L10 13 L2 15 Z" fill="none" stroke="#56648a" stroke-width="0.8"/><path d="M3 9 V14 M6 8.5 V14" stroke="#56648a" stroke-width="0.7"/></g><path d="M10 7 L40 6 L46 12 L46 18 L10 19 Z" fill="#121216" filter="url(#b1)"/><circle cx="32" cy="8" r="10.2" fill="url(#hl)" opacity="0.85"/><circle cx="32" cy="8" r="3.0" fill="#fff" opacity="1.0" filter="url(#b1)"/><circle cx="14" cy="9" r="3.74" fill="url(#hl)" opacity="0.68"/><circle cx="14" cy="9" r="1.1" fill="#fff" opacity="0.8" filter="url(#b1)"/><rect x="18" y="13" width="7" height="2.6" fill="#3a86f0" filter="url(#b05)"/><path d="M8 27 L16 20 L19.5 20 L11.5 27 Z M15 27 L23 20 L26.5 20 L18.5 27 Z M22 27 L30 20 L33.5 20 L25.5 27 Z" fill="#55575f" filter="url(#b05)"/><path d="M8 23 L38 21" stroke="#44464f" stroke-width="1"/><rect x="49" y="3" width="2" height="3" fill="#6a1420" filter="url(#b05)"/><rect x="50" y="9" width="1.6" height="4" fill="#501018" filter="url(#b05)"/></svg>
<div class="abs" style="left:1012.1px;top:521.20px;width:55.8px;height:18.8px;background:#d9534f;border-radius:2.5px"></div>
<div class="abs" style="left:1073.7px;top:521.20px;width:55.8px;height:18.8px;background:#337ab7;border-radius:2.5px"></div>
<div class="abs" style="left:1135.1px;top:521.20px;width:75px;height:18.8px;background:#337ab7;border-radius:2.5px"></div>
<div class="abs" style="left:562px;top:555.1px;width:10px;height:8.0px;background:#fcfcfc"></div>
<svg class="abs" style="left:914px;top:546.0px" width="55" height="27.6" viewBox="0 0 55 29.4" preserveAspectRatio="none"><rect width="55" height="29.4" fill="#070709"/><rect width="55" height="1.4" fill="#5a5a5a"/><g filter="url(#b05)"><path d="M1 11 L4 8 L9 7 L10 13 L2 15 Z" fill="none" stroke="#56648a" stroke-width="0.8"/><path d="M3 9 V14 M6 8.5 V14" stroke="#56648a" stroke-width="0.7"/></g><path d="M10 7 L40 6 L46 12 L46 18 L10 19 Z" fill="#121216" filter="url(#b1)"/><circle cx="30" cy="8" r="11.049999999999999" fill="url(#hl)" opacity="0.85"/><circle cx="30" cy="8" r="3.25" fill="#fff" opacity="1.0" filter="url(#b1)"/><circle cx="14" cy="8" r="3.4" fill="url(#hl)" opacity="0.68"/><circle cx="14" cy="8" r="1.0" fill="#fff" opacity="0.8" filter="url(#b1)"/><rect x="17" y="12" width="8" height="2.6" fill="#3a86f0" filter="url(#b05)"/><path d="M8 27 L16 20 L19.5 20 L11.5 27 Z M15 27 L23 20 L26.5 20 L18.5 27 Z M22 27 L30 20 L33.5 20 L25.5 27 Z" fill="#55575f" filter="url(#b05)"/><path d="M8 23 L38 21" stroke="#44464f" stroke-width="1"/><rect x="49" y="3" width="2" height="3" fill="#6a1420" filter="url(#b05)"/><rect x="50" y="9" width="1.6" height="4" fill="#501018" filter="url(#b05)"/></svg>
<div class="abs" style="left:1012.1px;top:550.30px;width:55.8px;height:18.8px;background:#d9534f;border-radius:2.5px"></div>
<div class="abs" style="left:1073.7px;top:550.30px;width:55.8px;height:18.8px;background:#337ab7;border-radius:2.5px"></div>
<div class="abs" style="left:1135.1px;top:550.30px;width:75px;height:18.8px;background:#337ab7;border-radius:2.5px"></div>
<div class="abs" style="left:562px;top:583.5px;width:10px;height:8.0px;background:#fdfdfd"></div>
<svg class="abs" style="left:914px;top:574.0px" width="55" height="28.6" viewBox="0 0 55 29.4" preserveAspectRatio="none"><rect width="55" height="29.4" fill="#070709"/><rect width="55" height="1.4" fill="#5a5a5a"/><g filter="url(#b05)"><path d="M1 11 L4 8 L9 7 L10 13 L2 15 Z" fill="none" stroke="#56648a" stroke-width="0.8"/><path d="M3 9 V14 M6 8.5 V14" stroke="#56648a" stroke-width="0.7"/></g><path d="M10 7 L40 6 L46 12 L46 18 L10 19 Z" fill="#121216" filter="url(#b1)"/><circle cx="30" cy="9" r="10.2" fill="url(#hl)" opacity="0.85"/><circle cx="30" cy="9" r="3.0" fill="#fff" opacity="1.0" filter="url(#b1)"/><circle cx="12" cy="9" r="3.4" fill="url(#hl)" opacity="0.68"/><circle cx="12" cy="9" r="1.0" fill="#fff" opacity="0.8" filter="url(#b1)"/><rect x="15" y="14" width="8" height="2.6" fill="#3a86f0" filter="url(#b05)"/><path d="M8 27 L16 20 L19.5 20 L11.5 27 Z M15 27 L23 20 L26.5 20 L18.5 27 Z M22 27 L30 20 L33.5 20 L25.5 27 Z" fill="#55575f" filter="url(#b05)"/><path d="M8 23 L38 21" stroke="#44464f" stroke-width="1"/><rect x="49" y="3" width="2" height="3" fill="#6a1420" filter="url(#b05)"/><rect x="50" y="9" width="1.6" height="4" fill="#501018" filter="url(#b05)"/></svg>
<div class="abs" style="left:1012.1px;top:578.70px;width:55.8px;height:18.8px;background:#d9534f;border-radius:2.5px"></div>
<div class="abs" style="left:1073.7px;top:578.70px;width:55.8px;height:18.8px;background:#337ab7;border-radius:2.5px"></div>
<div class="abs" style="left:1135.1px;top:578.70px;width:75px;height:18.8px;background:#337ab7;border-radius:2.5px"></div>
<div class="abs" style="left:1261px;top:60px;width:10px;height:544.5px;background:#f9f9f9"></div>
<svg class="abs" style="left:1262.8px;top:61.8px" width="6.4" height="4" viewBox="0 0 6.4 4"><path d="M0 3.8 L3.2 0.2 L6.4 3.8 Z" fill="#888"/></svg>
<svg class="abs" style="left:1262.8px;top:598px" width="6.4" height="4" viewBox="0 0 6.4 4"><path d="M0 0.2 L3.2 3.8 L6.4 0.2 Z" fill="#888"/></svg>
<div class="abs" style="left:1263px;top:68.8px;width:6px;height:278px;background:#888;border-radius:3px"></div>
<div class="tx" style="left:-72.10px;top:4.92px;width:300px;text-align:center;transform-origin:50% 50%;font-size:14px;transform:scale(0.9769,0.8600);font-weight:bold;-webkit-text-stroke:0.2px #fff;color:#fff">智慧出租车服务平台</div>
<div class="tx" style="left:192.05px;top:4.58px;transform-origin:0 50%;font-size:10px;transform:scale(0.9420,0.8500);color:#fff;-webkit-text-stroke:0.2px #fff">欢迎 showadmin</div>
<div class="tx" style="left:1054.83px;top:4.35px;transform-origin:0 50%;font-size:10px;transform:scale(0.9569,0.8500);color:#fff;-webkit-text-stroke:0.25px #fff">驾驶舱</div>
<div class="tx" style="left:1109.20px;top:4.35px;transform-origin:0 50%;font-size:10px;transform:scale(0.9569,0.8500);color:#fff;-webkit-text-stroke:0.25px #fff">值班调度</div>
<div class="tx" style="left:1170.70px;top:4.35px;transform-origin:0 50%;font-size:10px;transform:scale(0.9569,0.8500);color:#fff;-webkit-text-stroke:0.25px #fff">修改密码</div>
<div class="tx" style="left:1235.62px;top:4.35px;transform-origin:0 50%;font-size:10px;transform:scale(0.9569,0.8500);color:#fff;-webkit-text-stroke:0.25px #fff">退出系统</div>
<div class="tx" style="left:24.77px;top:31.40px;transform-origin:0 50%;font-size:10px;transform:scale(0.9623,0.8500);font-weight:bold;-webkit-text-stroke:0.1px #fff;color:#fff">蓄车场</div>
<div class="tx" style="left:29.14px;top:52.53px;transform-origin:0 50%;font-size:10px;transform:scale(0.9621,0.8500);font-weight:bold;color:#fff">调度管理</div>
<div class="tx" style="left:29.14px;top:69.53px;transform-origin:0 50%;font-size:10px;transform:scale(0.9621,0.8500);font-weight:bold;color:#8aa4af">商场审核</div>
<div class="tx" style="left:29.14px;top:86.53px;transform-origin:0 50%;font-size:10px;transform:scale(0.9621,0.8500);font-weight:bold;color:#8aa4af">预约列表</div>
<div class="tx" style="left:29.14px;top:103.53px;transform-origin:0 50%;font-size:10px;transform:scale(0.9621,0.8500);font-weight:bold;color:#8aa4af">预约审核</div>
<div class="tx" style="left:29.39px;top:120.53px;transform-origin:0 50%;font-size:10px;transform:scale(0.9621,0.8500);font-weight:bold;color:#8aa4af">公告通知</div>
<div class="tx" style="left:29.14px;top:137.53px;transform-origin:0 50%;font-size:10px;transform:scale(0.9621,0.8500);font-weight:bold;color:#8aa4af">车场配置</div>
<div class="tx" style="left:29.14px;top:154.53px;transform-origin:0 50%;font-size:10px;transform:scale(0.9621,0.8500);font-weight:bold;color:#8aa4af">区域打点</div>
<div class="tx" style="left:28.41px;top:171.53px;transform-origin:0 50%;font-size:10px;transform:scale(0.9621,0.8500);font-weight:bold;color:#8aa4af">蓄车场通行记录</div>
<div class="tx" style="left:28.41px;top:188.53px;transform-origin:0 50%;font-size:10px;transform:scale(0.9621,0.8500);font-weight:bold;color:#8aa4af">过夜车通行记录</div>
<div class="tx" style="left:24.80px;top:209.36px;transform-origin:0 50%;font-size:10px;transform:scale(0.9569,0.8500);font-weight:bold;color:#b8c7ce">上客区</div>
<div class="tx" style="left:24.80px;top:234.38px;transform-origin:0 50%;font-size:10px;transform:scale(0.9569,0.8500);font-weight:bold;color:#b8c7ce">短途车</div>
<div class="tx" style="left:24.31px;top:259.40px;transform-origin:0 50%;font-size:10px;transform:scale(0.9569,0.8500);font-weight:bold;color:#b8c7ce">信用管理</div>
<div class="tx" style="left:24.56px;top:284.42px;transform-origin:0 50%;font-size:10px;transform:scale(0.9569,0.8500);font-weight:bold;color:#b8c7ce">异常行为</div>
<div class="tx" style="left:24.31px;top:309.44px;transform-origin:0 50%;font-size:10px;transform:scale(0.9569,0.8500);font-weight:bold;color:#b8c7ce">人车信息</div>
<div class="tx" style="left:24.31px;top:334.46px;transform-origin:0 50%;font-size:10px;transform:scale(0.9569,0.8500);font-weight:bold;color:#b8c7ce">车辆管理</div>
<div class="tx" style="left:24.31px;top:359.48px;transform-origin:0 50%;font-size:10px;transform:scale(0.9569,0.8500);font-weight:bold;color:#b8c7ce">设备管理</div>
<div class="tx" style="left:24.31px;top:384.50px;transform-origin:0 50%;font-size:10px;transform:scale(0.9569,0.8500);font-weight:bold;color:#b8c7ce">系统设置</div>
<div class="tx" style="left:24.31px;top:409.52px;transform-origin:0 50%;font-size:10px;transform:scale(0.9569,0.8500);font-weight:bold;color:#b8c7ce">系统管理</div>
<div class="tx" style="left:186.46px;top:30.18px;transform-origin:0 50%;font-size:9px;transform:scale(0.9772,0.8500);color:#666;-webkit-text-stroke:0.2px #666">首页</div>
<div class="tx" style="left:207.69px;top:30.18px;transform-origin:0 50%;font-size:9px;transform:scale(0.9772,0.8500);color:#bbb">&gt;</div>
<div class="tx" style="left:217.93px;top:30.18px;transform-origin:0 50%;font-size:9px;transform:scale(0.9772,0.8500);color:#666;-webkit-text-stroke:0.2px #666">调度管理</div>
<div class="tx" style="left:860.14px;top:29.51px;transform-origin:0 50%;font-size:10px;transform:scale(0.9383,0.8500);font-weight:bold;-webkit-text-stroke:0.15px #333">系统运行时间：</div>
<div class="tx" style="left:951.60px;top:29.51px;transform-origin:0 50%;font-size:10px;transform:scale(0.9383,0.8500);font-weight:bold;-webkit-text-stroke:0.15px #333">天</div>
<div class="tx" style="left:985.72px;top:29.51px;transform-origin:0 50%;font-size:10px;transform:scale(0.9383,0.8500);font-weight:bold;-webkit-text-stroke:0.15px #333">小时</div>
<div class="tx" style="left:1029.80px;top:29.51px;transform-origin:0 50%;font-size:10px;transform:scale(0.9383,0.8500);font-weight:bold;-webkit-text-stroke:0.15px #333">分</div>
<div class="tx" style="left:1063.20px;top:29.51px;transform-origin:0 50%;font-size:10px;transform:scale(0.9383,0.8500);font-weight:bold;-webkit-text-stroke:0.15px #333">秒</div>
<div class="tx" style="left:1083.17px;top:29.51px;transform-origin:0 50%;font-size:10px;transform:scale(0.9383,0.8500);font-weight:bold;-webkit-text-stroke:0.15px #333">硬件层运行时间：</div>
<div class="tx" style="left:1184.26px;top:29.51px;transform-origin:0 50%;font-size:10px;transform:scale(0.9383,0.8500);font-weight:bold;-webkit-text-stroke:0.15px #333">小时</div>
<div class="tx" style="left:1228.00px;top:29.51px;transform-origin:0 50%;font-size:10px;transform:scale(0.9383,0.8500);font-weight:bold;-webkit-text-stroke:0.15px #333">分</div>
<div class="tx" style="left:1262.20px;top:29.51px;transform-origin:0 50%;font-size:10px;transform:scale(0.9383,0.8500);font-weight:bold;-webkit-text-stroke:0.15px #333">秒</div>
<div class="tx" style="left:790.20px;top:29.30px;width:300px;text-align:center;transform-origin:50% 50%;font-size:11px;transform:scale(0.9500,0.8500);font-weight:bold;-webkit-text-stroke:0.1px #fff;color:#fff">4</div>
<div class="tx" style="left:824.45px;top:29.30px;width:300px;text-align:center;transform-origin:50% 50%;font-size:11px;transform:scale(0.9500,0.8500);font-weight:bold;-webkit-text-stroke:0.1px #fff;color:#fff">1</div>
<div class="tx" style="left:868.00px;top:29.30px;width:300px;text-align:center;transform-origin:50% 50%;font-size:11px;transform:scale(0.9500,0.8500);font-weight:bold;-webkit-text-stroke:0.1px #fff;color:#fff">12</div>
<div class="tx" style="left:902.60px;top:29.30px;width:300px;text-align:center;transform-origin:50% 50%;font-size:11px;transform:scale(0.9500,0.8500);font-weight:bold;-webkit-text-stroke:0.1px #fff;color:#fff">30</div>
<div class="tx" style="left:1022.75px;top:29.30px;width:300px;text-align:center;transform-origin:50% 50%;font-size:11px;transform:scale(0.9500,0.8500);font-weight:bold;-webkit-text-stroke:0.1px #fff;color:#fff">8</div>
<div class="tx" style="left:1066.45px;top:29.30px;width:300px;text-align:center;transform-origin:50% 50%;font-size:11px;transform:scale(0.9500,0.8500);font-weight:bold;-webkit-text-stroke:0.1px #fff;color:#fff">59</div>
<div class="tx" style="left:1100.90px;top:29.30px;width:300px;text-align:center;transform-origin:50% 50%;font-size:11px;transform:scale(0.9500,0.8500);font-weight:bold;-webkit-text-stroke:0.1px #fff;color:#fff">24</div>
<div class="tx" style="left:174.97px;top:70.34px;transform-origin:0 50%;font-size:10px;transform:scale(0.9883,0.8500);font-weight:bold;-webkit-text-stroke:0.2px #333">入场类型:</div>
<div class="tx" style="left:233.53px;top:70.26px;transform-origin:0 50%;font-size:10px;transform:scale(0.9794,0.8500);-webkit-text-stroke:0.2px #333">当日车</div>
<div class="tx" style="left:377.23px;top:70.34px;transform-origin:0 50%;font-size:10px;transform:scale(0.9883,0.8500);font-weight:bold;-webkit-text-stroke:0.2px #333">车牌号:</div>
<div class="tx" style="left:1081.58px;top:70.19px;transform-origin:0 50%;font-size:16px;transform:scale(0.9877,0.8100);font-weight:bold;-webkit-text-stroke:0.25px #f00;color:#f00">定时刷新:30秒刷新一次</div>
<div class="tx" style="left:168.56px;top:94.93px;transform-origin:0 50%;font-size:10px;transform:scale(0.9606,0.8500);font-weight:bold;-webkit-text-stroke:0.2px #333">T1上客区进场车辆数：0</div>
<div class="tx" style="left:305.81px;top:94.93px;transform-origin:0 50%;font-size:10px;transform:scale(0.9606,0.8500);font-weight:bold;-webkit-text-stroke:0.2px #333">T2上客区进场车辆数：80</div>
<div class="tx" style="left:442.39px;top:94.93px;transform-origin:0 50%;font-size:10px;transform:scale(0.9606,0.8500);font-weight:bold;-webkit-text-stroke:0.2px #333">蓄车场在场车辆数：187</div>
<div class="tx" style="left:580.49px;top:94.93px;transform-origin:0 50%;font-size:10px;transform:scale(0.9606,0.8500);font-weight:bold;-webkit-text-stroke:0.2px #333">蓄车场剩余车位数：113</div>
<div class="tx" style="left:168.11px;top:111.88px;transform-origin:0 50%;font-size:10px;transform:scale(0.9606,0.8500);font-weight:bold;-webkit-text-stroke:0.2px #333">出口放车间隔：5秒/辆</div>
<div class="tx" style="left:305.61px;top:111.88px;transform-origin:0 50%;font-size:10px;transform:scale(0.9606,0.8500);font-weight:bold;-webkit-text-stroke:0.2px #333">清场时间：03:30:00</div>
<div class="tx" style="left:442.83px;top:111.88px;transform-origin:0 50%;font-size:10px;transform:scale(0.9606,0.8500);font-weight:bold;-webkit-text-stroke:0.2px #333">开放时间：2025-06-10 02:38:05</div>
<div class="tx" style="left:601.29px;top:111.88px;transform-origin:0 50%;font-size:10px;transform:scale(0.9606,0.8500);font-weight:bold;-webkit-text-stroke:0.2px #333">调度时间：2025-06-10 08:00:00</div>
<div class="tx" style="left:168.49px;top:129.38px;transform-origin:0 50%;font-size:10px;transform:scale(0.9606,0.8500);font-weight:bold;-webkit-text-stroke:0.2px #333">地磁配置：地磁车位10个，有10个地磁为空时放行车辆，地磁空余9个</div>
<div class="tx" style="left:511.64px;top:129.38px;transform-origin:0 50%;font-size:10px;transform:scale(0.9606,0.8500);font-weight:bold;-webkit-text-stroke:0.2px #333">上车排队数：5</div>
<div class="tx" style="left:779.58px;top:147.02px;width:300px;text-align:center;transform-origin:50% 50%;font-size:10px;transform:scale(0.9500,0.8500);font-weight:bold;color:#fff">重置</div>
<div class="tx" style="left:818.88px;top:147.02px;width:300px;text-align:center;transform-origin:50% 50%;font-size:10px;transform:scale(0.9500,0.8500);font-weight:bold;color:#fff">查询</div>
<div class="tx" style="left:868.17px;top:147.02px;width:300px;text-align:center;transform-origin:50% 50%;font-size:10px;transform:scale(0.9500,0.8500);font-weight:bold;color:#fff">配置修改</div>
<div class="tx" style="left:926.23px;top:147.02px;width:300px;text-align:center;transform-origin:50% 50%;font-size:10px;transform:scale(0.9500,0.8500);font-weight:bold;color:#fff">地磁配置</div>
<div class="tx" style="left:985.08px;top:147.02px;width:300px;text-align:center;transform-origin:50% 50%;font-size:10px;transform:scale(0.9500,0.8500);font-weight:bold;color:#fff">批量放行</div>
<div class="tx" style="left:1043.48px;top:147.02px;width:300px;text-align:center;transform-origin:50% 50%;font-size:10px;transform:scale(0.9500,0.8500);font-weight:bold;color:#fff">录入车辆</div>
<div class="tx" style="left:1092.67px;top:147.02px;width:300px;text-align:center;transform-origin:50% 50%;font-size:10px;transform:scale(0.9500,0.8500);font-weight:bold;color:#fff">清场</div>
<div class="tx" style="left:53.27px;top:180.51px;width:300px;text-align:center;transform-origin:50% 50%;font-size:10px;transform:scale(0.9512,0.8500);font-weight:bold;-webkit-text-stroke:0.2px #333">当日序号</div>
<div class="tx" style="left:139.61px;top:180.51px;width:300px;text-align:center;transform-origin:50% 50%;font-size:10px;transform:scale(0.9512,0.8500);font-weight:bold;-webkit-text-stroke:0.2px #333">入场类型</div>
<div class="tx" style="left:242.47px;top:180.51px;width:300px;text-align:center;transform-origin:50% 50%;font-size:10px;transform:scale(0.9512,0.8500);font-weight:bold;-webkit-text-stroke:0.2px #333">状态</div>
<div class="tx" style="left:345.82px;top:180.51px;width:300px;text-align:center;transform-origin:50% 50%;font-size:10px;transform:scale(0.9512,0.8500);font-weight:bold;-webkit-text-stroke:0.2px #333">相机名称</div>
<div class="tx" style="left:431.87px;top:180.51px;width:300px;text-align:center;transform-origin:50% 50%;font-size:10px;transform:scale(0.9512,0.8500);font-weight:bold;-webkit-text-stroke:0.2px #333">车牌号</div>
<div class="tx" style="left:500.82px;top:180.51px;width:300px;text-align:center;transform-origin:50% 50%;font-size:10px;transform:scale(0.9512,0.8500);font-weight:bold;-webkit-text-stroke:0.2px #333">司机名称</div>
<div class="tx" style="left:569.52px;top:180.51px;width:300px;text-align:center;transform-origin:50% 50%;font-size:10px;transform:scale(0.9512,0.8500);font-weight:bold;-webkit-text-stroke:0.2px #333">车类名称</div>
<div class="tx" style="left:672.22px;top:180.51px;width:300px;text-align:center;transform-origin:50% 50%;font-size:10px;transform:scale(0.9512,0.8500);font-weight:bold;-webkit-text-stroke:0.2px #333">进场时间</div>
<div class="tx" style="left:792.37px;top:180.51px;width:300px;text-align:center;transform-origin:50% 50%;font-size:10px;transform:scale(0.9512,0.8500);font-weight:bold;-webkit-text-stroke:0.2px #333">进场图片</div>
<div class="tx" style="left:957.37px;top:180.51px;width:300px;text-align:center;transform-origin:50% 50%;font-size:10px;transform:scale(0.9512,0.8500);font-weight:bold;-webkit-text-stroke:0.2px #333">操作</div>
<div class="tx" style="left:54.55px;top:199.77px;width:300px;text-align:center;transform-origin:50% 50%;font-size:10px;transform:scale(0.9656,0.8500);color:#262626;-webkit-text-stroke:0.25px #262626">258</div>
<div class="tx" style="left:139.93px;top:199.77px;width:300px;text-align:center;transform-origin:50% 50%;font-size:10px;transform:scale(0.9656,0.8500);color:#262626;-webkit-text-stroke:0.25px #262626">当日车</div>
<div class="tx" style="left:243.58px;top:199.77px;width:300px;text-align:center;transform-origin:50% 50%;font-size:10px;transform:scale(0.9656,0.8500);color:#262626;-webkit-text-stroke:0.25px #262626">等待前往T2</div>
<div class="tx" style="left:346.57px;top:199.77px;width:300px;text-align:center;transform-origin:50% 50%;font-size:10px;transform:scale(0.9656,0.8500);color:#262626;-webkit-text-stroke:0.25px #262626">蓄车场入口</div>
<div class="tx" style="left:569.74px;top:199.77px;width:300px;text-align:center;transform-origin:50% 50%;font-size:10px;transform:scale(0.9656,0.8500);color:#262626;-webkit-text-stroke:0.25px #262626">短途车</div>
<div class="tx" style="left:672.97px;top:199.77px;width:300px;text-align:center;transform-origin:50% 50%;font-size:10px;transform:scale(0.9656,0.8500);color:#262626;-webkit-text-stroke:0.25px #262626">2025-06-10 10:21:24.029</div>
<div class="tx" style="left:890.00px;top:203.50px;width:300px;text-align:center;transform-origin:50% 50%;font-size:10px;transform:scale(0.9800,0.8500);font-weight:bold;color:#fff">移除排队</div>
<div class="tx" style="left:951.60px;top:203.50px;width:300px;text-align:center;transform-origin:50% 50%;font-size:10px;transform:scale(0.9800,0.8500);font-weight:bold;color:#fff">变更序号</div>
<div class="tx" style="left:1022.60px;top:203.50px;width:300px;text-align:center;transform-origin:50% 50%;font-size:10px;transform:scale(0.9800,0.8500);font-weight:bold;color:#fff">修改司机信息</div>
<div class="tx" style="left:54.31px;top:228.87px;width:300px;text-align:center;transform-origin:50% 50%;font-size:10px;transform:scale(0.9656,0.8500);color:#262626;-webkit-text-stroke:0.25px #262626">65</div>
<div class="tx" style="left:140.06px;top:228.87px;width:300px;text-align:center;transform-origin:50% 50%;font-size:10px;transform:scale(0.9656,0.8500);color:#262626;-webkit-text-stroke:0.25px #262626">当日车</div>
<div class="tx" style="left:243.22px;top:228.87px;width:300px;text-align:center;transform-origin:50% 50%;font-size:10px;transform:scale(0.9656,0.8500);color:#262626;-webkit-text-stroke:0.25px #262626">等待前往T2</div>
<div class="tx" style="left:346.76px;top:228.87px;width:300px;text-align:center;transform-origin:50% 50%;font-size:10px;transform:scale(0.9656,0.8500);color:#262626;-webkit-text-stroke:0.25px #262626">蓄车场过夜车入口</div>
<div class="tx" style="left:570.27px;top:228.87px;width:300px;text-align:center;transform-origin:50% 50%;font-size:10px;transform:scale(0.9656,0.8500);color:#262626;-webkit-text-stroke:0.25px #262626">正常车</div>
<div class="tx" style="left:673.05px;top:228.87px;width:300px;text-align:center;transform-origin:50% 50%;font-size:10px;transform:scale(0.9656,0.8500);color:#262626;-webkit-text-stroke:0.25px #262626">2025-06-09 20:19:08.02</div>
<div class="tx" style="left:890.00px;top:232.60px;width:300px;text-align:center;transform-origin:50% 50%;font-size:10px;transform:scale(0.9800,0.8500);font-weight:bold;color:#fff">移除排队</div>
<div class="tx" style="left:951.60px;top:232.60px;width:300px;text-align:center;transform-origin:50% 50%;font-size:10px;transform:scale(0.9800,0.8500);font-weight:bold;color:#fff">变更序号</div>
<div class="tx" style="left:1022.60px;top:232.60px;width:300px;text-align:center;transform-origin:50% 50%;font-size:10px;transform:scale(0.9800,0.8500);font-weight:bold;color:#fff">修改司机信息</div>
<div class="tx" style="left:54.31px;top:257.27px;width:300px;text-align:center;transform-origin:50% 50%;font-size:10px;transform:scale(0.9656,0.8500);color:#262626;-webkit-text-stroke:0.25px #262626">70</div>
<div class="tx" style="left:140.06px;top:257.27px;width:300px;text-align:center;transform-origin:50% 50%;font-size:10px;transform:scale(0.9656,0.8500);color:#262626;-webkit-text-stroke:0.25px #262626">当日车</div>
<div class="tx" style="left:243.22px;top:257.27px;width:300px;text-align:center;transform-origin:50% 50%;font-size:10px;transform:scale(0.9656,0.8500);color:#262626;-webkit-text-stroke:0.25px #262626">等待前往T2</div>
<div class="tx" style="left:346.57px;top:257.27px;width:300px;text-align:center;transform-origin:50% 50%;font-size:10px;transform:scale(0.9656,0.8500);color:#262626;-webkit-text-stroke:0.25px #262626">蓄车场过夜车入口</div>
<div class="tx" style="left:570.27px;top:257.27px;width:300px;text-align:center;transform-origin:50% 50%;font-size:10px;transform:scale(0.9656,0.8500);color:#262626;-webkit-text-stroke:0.25px #262626">正常车</div>
<div class="tx" style="left:672.97px;top:257.27px;width:300px;text-align:center;transform-origin:50% 50%;font-size:10px;transform:scale(0.9656,0.8500);color:#262626;-webkit-text-stroke:0.25px #262626">2025-06-09 20:56:10.779</div>
<div class="tx" style="left:890.00px;top:261.00px;width:300px;text-align:center;transform-origin:50% 50%;font-size:10px;transform:scale(0.9800,0.8500);font-weight:bold;color:#fff">移除排队</div>
<div class="tx" style="left:951.60px;top:261.00px;width:300px;text-align:center;transform-origin:50% 50%;font-size:10px;transform:scale(0.9800,0.8500);font-weight:bold;color:#fff">变更序号</div>
<div class="tx" style="left:1022.60px;top:261.00px;width:300px;text-align:center;transform-origin:50% 50%;font-size:10px;transform:scale(0.9800,0.8500);font-weight:bold;color:#fff">修改司机信息</div>
<div class="tx" style="left:54.31px;top:286.07px;width:300px;text-align:center;transform-origin:50% 50%;font-size:10px;transform:scale(0.9656,0.8500);color:#262626;-webkit-text-stroke:0.25px #262626">71</div>
<div class="tx" style="left:140.06px;top:286.07px;width:300px;text-align:center;transform-origin:50% 50%;font-size:10px;transform:scale(0.9656,0.8500);color:#262626;-webkit-text-stroke:0.25px #262626">当日车</div>
<div class="tx" style="left:243.22px;top:286.07px;width:300px;text-align:center;transform-origin:50% 50%;font-size:10px;transform:scale(0.9656,0.8500);color:#262626;-webkit-text-stroke:0.25px #262626">等待前往T2</div>
<div class="tx" style="left:346.57px;top:286.07px;width:300px;text-align:center;transform-origin:50% 50%;font-size:10px;transform:scale(0.9656,0.8500);color:#262626;-webkit-text-stroke:0.25px #262626">蓄车场过夜车入口</div>
<div class="tx" style="left:570.27px;top:286.07px;width:300px;text-align:center;transform-origin:50% 50%;font-size:10px;transform:scale(0.9656,0.8500);color:#262626;-webkit-text-stroke:0.25px #262626">正常车</div>
<div class="tx" style="left:672.97px;top:286.07px;width:300px;text-align:center;transform-origin:50% 50%;font-size:10px;transform:scale(0.9656,0.8500);color:#262626;-webkit-text-stroke:0.25px #262626">2025-06-09 20:56:17.386</div>
<div class="tx" style="left:890.00px;top:289.80px;width:300px;text-align:center;transform-origin:50% 50%;font-size:10px;transform:scale(0.9800,0.8500);font-weight:bold;color:#fff">移除排队</div>
<div class="tx" style="left:951.60px;top:289.80px;width:300px;text-align:center;transform-origin:50% 50%;font-size:10px;transform:scale(0.9800,0.8500);font-weight:bold;color:#fff">变更序号</div>
<div class="tx" style="left:1022.60px;top:289.80px;width:300px;text-align:center;transform-origin:50% 50%;font-size:10px;transform:scale(0.9800,0.8500);font-weight:bold;color:#fff">修改司机信息</div>
<div class="tx" style="left:54.31px;top:314.87px;width:300px;text-align:center;transform-origin:50% 50%;font-size:10px;transform:scale(0.9656,0.8500);color:#262626;-webkit-text-stroke:0.25px #262626">72</div>
<div class="tx" style="left:140.06px;top:314.87px;width:300px;text-align:center;transform-origin:50% 50%;font-size:10px;transform:scale(0.9656,0.8500);color:#262626;-webkit-text-stroke:0.25px #262626">当日车</div>
<div class="tx" style="left:243.22px;top:314.87px;width:300px;text-align:center;transform-origin:50% 50%;font-size:10px;transform:scale(0.9656,0.8500);color:#262626;-webkit-text-stroke:0.25px #262626">等待前往T2</div>
<div class="tx" style="left:346.57px;top:314.87px;width:300px;text-align:center;transform-origin:50% 50%;font-size:10px;transform:scale(0.9656,0.8500);color:#262626;-webkit-text-stroke:0.25px #262626">蓄车场过夜车入口</div>
<div class="tx" style="left:570.27px;top:314.87px;width:300px;text-align:center;transform-origin:50% 50%;font-size:10px;transform:scale(0.9656,0.8500);color:#262626;-webkit-text-stroke:0.25px #262626">正常车</div>
<div class="tx" style="left:672.97px;top:314.87px;width:300px;text-align:center;transform-origin:50% 50%;font-size:10px;transform:scale(0.9656,0.8500);color:#262626;-webkit-text-stroke:0.25px #262626">2025-06-09 21:02:32.761</div>
<div class="tx" style="left:890.00px;top:318.60px;width:300px;text-align:center;transform-origin:50% 50%;font-size:10px;transform:scale(0.9800,0.8500);font-weight:bold;color:#fff">移除排队</div>
<div class="tx" style="left:951.60px;top:318.60px;width:300px;text-align:center;transform-origin:50% 50%;font-size:10px;transform:scale(0.9800,0.8500);font-weight:bold;color:#fff">变更序号</div>
<div class="tx" style="left:1022.60px;top:318.60px;width:300px;text-align:center;transform-origin:50% 50%;font-size:10px;transform:scale(0.9800,0.8500);font-weight:bold;color:#fff">修改司机信息</div>
<div class="tx" style="left:54.31px;top:343.77px;width:300px;text-align:center;transform-origin:50% 50%;font-size:10px;transform:scale(0.9656,0.8500);color:#262626;-webkit-text-stroke:0.25px #262626">73</div>
<div class="tx" style="left:140.06px;top:343.77px;width:300px;text-align:center;transform-origin:50% 50%;font-size:10px;transform:scale(0.9656,0.8500);color:#262626;-webkit-text-stroke:0.25px #262626">当日车</div>
<div class="tx" style="left:243.22px;top:343.77px;width:300px;text-align:center;transform-origin:50% 50%;font-size:10px;transform:scale(0.9656,0.8500);color:#262626;-webkit-text-stroke:0.25px #262626">等待前往T2</div>
<div class="tx" style="left:346.57px;top:343.77px;width:300px;text-align:center;transform-origin:50% 50%;font-size:10px;transform:scale(0.9656,0.8500);color:#262626;-webkit-text-stroke:0.25px #262626">蓄车场过夜车入口</div>
<div class="tx" style="left:570.27px;top:343.77px;width:300px;text-align:center;transform-origin:50% 50%;font-size:10px;transform:scale(0.9656,0.8500);color:#262626;-webkit-text-stroke:0.25px #262626">正常车</div>
<div class="tx" style="left:672.97px;top:343.77px;width:300px;text-align:center;transform-origin:50% 50%;font-size:10px;transform:scale(0.9656,0.8500);color:#262626;-webkit-text-stroke:0.25px #262626">2025-06-09 21:03:15.706</div>
<div class="tx" style="left:890.00px;top:347.50px;width:300px;text-align:center;transform-origin:50% 50%;font-size:10px;transform:scale(0.9800,0.8500);font-weight:bold;color:#fff">移除排队</div>
<div class="tx" style="left:951.60px;top:347.50px;width:300px;text-align:center;transform-origin:50% 50%;font-size:10px;transform:scale(0.9800,0.8500);font-weight:bold;color:#fff">变更序号</div>
<div class="tx" style="left:1022.60px;top:347.50px;width:300px;text-align:center;transform-origin:50% 50%;font-size:10px;transform:scale(0.9800,0.8500);font-weight:bold;color:#fff">修改司机信息</div>
<div class="tx" style="left:54.09px;top:372.87px;width:300px;text-align:center;transform-origin:50% 50%;font-size:10px;transform:scale(0.9656,0.8500);color:#262626;-webkit-text-stroke:0.25px #262626">268</div>
<div class="tx" style="left:140.06px;top:372.87px;width:300px;text-align:center;transform-origin:50% 50%;font-size:10px;transform:scale(0.9656,0.8500);color:#262626;-webkit-text-stroke:0.25px #262626">当日车</div>
<div class="tx" style="left:243.22px;top:372.87px;width:300px;text-align:center;transform-origin:50% 50%;font-size:10px;transform:scale(0.9656,0.8500);color:#262626;-webkit-text-stroke:0.25px #262626">排队中</div>
<div class="tx" style="left:346.57px;top:372.87px;width:300px;text-align:center;transform-origin:50% 50%;font-size:10px;transform:scale(0.9656,0.8500);color:#262626;-webkit-text-stroke:0.25px #262626">蓄车场入口</div>
<div class="tx" style="left:570.27px;top:372.87px;width:300px;text-align:center;transform-origin:50% 50%;font-size:10px;transform:scale(0.9656,0.8500);color:#262626;-webkit-text-stroke:0.25px #262626">短途车</div>
<div class="tx" style="left:672.97px;top:372.87px;width:300px;text-align:center;transform-origin:50% 50%;font-size:10px;transform:scale(0.9656,0.8500);color:#262626;-webkit-text-stroke:0.25px #262626">2025-06-10 10:34:35.48</div>
<div class="tx" style="left:890.00px;top:376.60px;width:300px;text-align:center;transform-origin:50% 50%;font-size:10px;transform:scale(0.9800,0.8500);font-weight:bold;color:#fff">移除排队</div>
<div class="tx" style="left:951.60px;top:376.60px;width:300px;text-align:center;transform-origin:50% 50%;font-size:10px;transform:scale(0.9800,0.8500);font-weight:bold;color:#fff">变更序号</div>
<div class="tx" style="left:1022.60px;top:376.60px;width:300px;text-align:center;transform-origin:50% 50%;font-size:10px;transform:scale(0.9800,0.8500);font-weight:bold;color:#fff">修改司机信息</div>
<div class="tx" style="left:54.31px;top:401.67px;width:300px;text-align:center;transform-origin:50% 50%;font-size:10px;transform:scale(0.9656,0.8500);color:#262626;-webkit-text-stroke:0.25px #262626">74</div>
<div class="tx" style="left:140.06px;top:401.67px;width:300px;text-align:center;transform-origin:50% 50%;font-size:10px;transform:scale(0.9656,0.8500);color:#262626;-webkit-text-stroke:0.25px #262626">当日车</div>
<div class="tx" style="left:243.22px;top:401.67px;width:300px;text-align:center;transform-origin:50% 50%;font-size:10px;transform:scale(0.9656,0.8500);color:#262626;-webkit-text-stroke:0.25px #262626">排队中</div>
<div class="tx" style="left:346.57px;top:401.67px;width:300px;text-align:center;transform-origin:50% 50%;font-size:10px;transform:scale(0.9656,0.8500);color:#262626;-webkit-text-stroke:0.25px #262626">蓄车场过夜车入口</div>
<div class="tx" style="left:570.27px;top:401.67px;width:300px;text-align:center;transform-origin:50% 50%;font-size:10px;transform:scale(0.9656,0.8500);color:#262626;-webkit-text-stroke:0.25px #262626">正常车</div>
<div class="tx" style="left:672.97px;top:401.67px;width:300px;text-align:center;transform-origin:50% 50%;font-size:10px;transform:scale(0.9656,0.8500);color:#262626;-webkit-text-stroke:0.25px #262626">2025-06-09 21:06:26.395</div>
<div class="tx" style="left:890.00px;top:405.40px;width:300px;text-align:center;transform-origin:50% 50%;font-size:10px;transform:scale(0.9800,0.8500);font-weight:bold;color:#fff">移除排队</div>
<div class="tx" style="left:951.60px;top:405.40px;width:300px;text-align:center;transform-origin:50% 50%;font-size:10px;transform:scale(0.9800,0.8500);font-weight:bold;color:#fff">变更序号</div>
<div class="tx" style="left:1022.60px;top:405.40px;width:300px;text-align:center;transform-origin:50% 50%;font-size:10px;transform:scale(0.9800,0.8500);font-weight:bold;color:#fff">修改司机信息</div>
<div class="tx" style="left:54.31px;top:430.17px;width:300px;text-align:center;transform-origin:50% 50%;font-size:10px;transform:scale(0.9656,0.8500);color:#262626;-webkit-text-stroke:0.25px #262626">75</div>
<div class="tx" style="left:140.06px;top:430.17px;width:300px;text-align:center;transform-origin:50% 50%;font-size:10px;transform:scale(0.9656,0.8500);color:#262626;-webkit-text-stroke:0.25px #262626">当日车</div>
<div class="tx" style="left:243.22px;top:430.17px;width:300px;text-align:center;transform-origin:50% 50%;font-size:10px;transform:scale(0.9656,0.8500);color:#262626;-webkit-text-stroke:0.25px #262626">排队中</div>
<div class="tx" style="left:346.57px;top:430.17px;width:300px;text-align:center;transform-origin:50% 50%;font-size:10px;transform:scale(0.9656,0.8500);color:#262626;-webkit-text-stroke:0.25px #262626">蓄车场过夜车入口</div>
<div class="tx" style="left:570.27px;top:430.17px;width:300px;text-align:center;transform-origin:50% 50%;font-size:10px;transform:scale(0.9656,0.8500);color:#262626;-webkit-text-stroke:0.25px #262626">正常车</div>
<div class="tx" style="left:672.97px;top:430.17px;width:300px;text-align:center;transform-origin:50% 50%;font-size:10px;transform:scale(0.9656,0.8500);color:#262626;-webkit-text-stroke:0.25px #262626">2025-06-09 21:07:14.627</div>
<div class="tx" style="left:890.00px;top:433.90px;width:300px;text-align:center;transform-origin:50% 50%;font-size:10px;transform:scale(0.9800,0.8500);font-weight:bold;color:#fff">移除排队</div>
<div class="tx" style="left:951.60px;top:433.90px;width:300px;text-align:center;transform-origin:50% 50%;font-size:10px;transform:scale(0.9800,0.8500);font-weight:bold;color:#fff">变更序号</div>
<div class="tx" style="left:1022.60px;top:433.90px;width:300px;text-align:center;transform-origin:50% 50%;font-size:10px;transform:scale(0.9800,0.8500);font-weight:bold;color:#fff">修改司机信息</div>
<div class="tx" style="left:54.31px;top:458.87px;width:300px;text-align:center;transform-origin:50% 50%;font-size:10px;transform:scale(0.9656,0.8500);color:#262626;-webkit-text-stroke:0.25px #262626">76</div>
<div class="tx" style="left:140.06px;top:458.87px;width:300px;text-align:center;transform-origin:50% 50%;font-size:10px;transform:scale(0.9656,0.8500);color:#262626;-webkit-text-stroke:0.25px #262626">当日车</div>
<div class="tx" style="left:243.22px;top:458.87px;width:300px;text-align:center;transform-origin:50% 50%;font-size:10px;transform:scale(0.9656,0.8500);color:#262626;-webkit-text-stroke:0.25px #262626">排队中</div>
<div class="tx" style="left:346.57px;top:458.87px;width:300px;text-align:center;transform-origin:50% 50%;font-size:10px;transform:scale(0.9656,0.8500);color:#262626;-webkit-text-stroke:0.25px #262626">蓄车场过夜车入口</div>
<div class="tx" style="left:570.27px;top:458.87px;width:300px;text-align:center;transform-origin:50% 50%;font-size:10px;transform:scale(0.9656,0.8500);color:#262626;-webkit-text-stroke:0.25px #262626">正常车</div>
<div class="tx" style="left:672.97px;top:458.87px;width:300px;text-align:center;transform-origin:50% 50%;font-size:10px;transform:scale(0.9656,0.8500);color:#262626;-webkit-text-stroke:0.25px #262626">2025-06-09 21:07:21.794</div>
<div class="tx" style="left:890.00px;top:462.60px;width:300px;text-align:center;transform-origin:50% 50%;font-size:10px;transform:scale(0.9800,0.8500);font-weight:bold;color:#fff">移除排队</div>
<div class="tx" style="left:951.60px;top:462.60px;width:300px;text-align:center;transform-origin:50% 50%;font-size:10px;transform:scale(0.9800,0.8500);font-weight:bold;color:#fff">变更序号</div>
<div class="tx" style="left:1022.60px;top:462.60px;width:300px;text-align:center;transform-origin:50% 50%;font-size:10px;transform:scale(0.9800,0.8500);font-weight:bold;color:#fff">修改司机信息</div>
<div class="tx" style="left:54.31px;top:487.77px;width:300px;text-align:center;transform-origin:50% 50%;font-size:10px;transform:scale(0.9656,0.8500);color:#262626;-webkit-text-stroke:0.25px #262626">77</div>
<div class="tx" style="left:140.06px;top:487.77px;width:300px;text-align:center;transform-origin:50% 50%;font-size:10px;transform:scale(0.9656,0.8500);color:#262626;-webkit-text-stroke:0.25px #262626">当日车</div>
<div class="tx" style="left:243.22px;top:487.77px;width:300px;text-align:center;transform-origin:50% 50%;font-size:10px;transform:scale(0.9656,0.8500);color:#262626;-webkit-text-stroke:0.25px #262626">排队中</div>
<div class="tx" style="left:346.57px;top:487.77px;width:300px;text-align:center;transform-origin:50% 50%;font-size:10px;transform:scale(0.9656,0.8500);color:#262626;-webkit-text-stroke:0.25px #262626">蓄车场过夜车入口</div>
<div class="tx" style="left:570.27px;top:487.77px;width:300px;text-align:center;transform-origin:50% 50%;font-size:10px;transform:scale(0.9656,0.8500);color:#262626;-webkit-text-stroke:0.25px #262626">正常车</div>
<div class="tx" style="left:672.97px;top:487.77px;width:300px;text-align:center;transform-origin:50% 50%;font-size:10px;transform:scale(0.9656,0.8500);color:#262626;-webkit-text-stroke:0.25px #262626">2025-06-09 21:17:57.56</div>
<div class="tx" style="left:890.00px;top:491.50px;width:300px;text-align:center;transform-origin:50% 50%;font-size:10px;transform:scale(0.9800,0.8500);font-weight:bold;color:#fff">移除排队</div>
<div class="tx" style="left:951.60px;top:491.50px;width:300px;text-align:center;transform-origin:50% 50%;font-size:10px;transform:scale(0.9800,0.8500);font-weight:bold;color:#fff">变更序号</div>
<div class="tx" style="left:1022.60px;top:491.50px;width:300px;text-align:center;transform-origin:50% 50%;font-size:10px;transform:scale(0.9800,0.8500);font-weight:bold;color:#fff">修改司机信息</div>
<div class="tx" style="left:54.31px;top:516.87px;width:300px;text-align:center;transform-origin:50% 50%;font-size:10px;transform:scale(0.9656,0.8500);color:#262626;-webkit-text-stroke:0.25px #262626">78</div>
<div class="tx" style="left:140.06px;top:516.87px;width:300px;text-align:center;transform-origin:50% 50%;font-size:10px;transform:scale(0.9656,0.8500);color:#262626;-webkit-text-stroke:0.25px #262626">当日车</div>
<div class="tx" style="left:243.22px;top:516.87px;width:300px;text-align:center;transform-origin:50% 50%;font-size:10px;transform:scale(0.9656,0.8500);color:#262626;-webkit-text-stroke:0.25px #262626">排队中</div>
<div class="tx" style="left:346.57px;top:516.87px;width:300px;text-align:center;transform-origin:50% 50%;font-size:10px;transform:scale(0.9656,0.8500);color:#262626;-webkit-text-stroke:0.25px #262626">蓄车场过夜车入口</div>
<div class="tx" style="left:570.27px;top:516.87px;width:300px;text-align:center;transform-origin:50% 50%;font-size:10px;transform:scale(0.9656,0.8500);color:#262626;-webkit-text-stroke:0.25px #262626">正常车</div>
<div class="tx" style="left:672.97px;top:516.87px;width:300px;text-align:center;transform-origin:50% 50%;font-size:10px;transform:scale(0.9656,0.8500);color:#262626;-webkit-text-stroke:0.25px #262626">2025-06-09 21:26:42.132</div>
<div class="tx" style="left:890.00px;top:520.60px;width:300px;text-align:center;transform-origin:50% 50%;font-size:10px;transform:scale(0.9800,0.8500);font-weight:bold;color:#fff">移除排队</div>
<div class="tx" style="left:951.60px;top:520.60px;width:300px;text-align:center;transform-origin:50% 50%;font-size:10px;transform:scale(0.9800,0.8500);font-weight:bold;color:#fff">变更序号</div>
<div class="tx" style="left:1022.60px;top:520.60px;width:300px;text-align:center;transform-origin:50% 50%;font-size:10px;transform:scale(0.9800,0.8500);font-weight:bold;color:#fff">修改司机信息</div>
<div class="tx" style="left:54.31px;top:545.97px;width:300px;text-align:center;transform-origin:50% 50%;font-size:10px;transform:scale(0.9656,0.8500);color:#262626;-webkit-text-stroke:0.25px #262626">79</div>
<div class="tx" style="left:140.06px;top:545.97px;width:300px;text-align:center;transform-origin:50% 50%;font-size:10px;transform:scale(0.9656,0.8500);color:#262626;-webkit-text-stroke:0.25px #262626">当日车</div>
<div class="tx" style="left:243.22px;top:545.97px;width:300px;text-align:center;transform-origin:50% 50%;font-size:10px;transform:scale(0.9656,0.8500);color:#262626;-webkit-text-stroke:0.25px #262626">排队中</div>
<div class="tx" style="left:346.57px;top:545.97px;width:300px;text-align:center;transform-origin:50% 50%;font-size:10px;transform:scale(0.9656,0.8500);color:#262626;-webkit-text-stroke:0.25px #262626">蓄车场过夜车入口</div>
<div class="tx" style="left:570.27px;top:545.97px;width:300px;text-align:center;transform-origin:50% 50%;font-size:10px;transform:scale(0.9656,0.8500);color:#262626;-webkit-text-stroke:0.25px #262626">正常车</div>
<div class="tx" style="left:672.97px;top:545.97px;width:300px;text-align:center;transform-origin:50% 50%;font-size:10px;transform:scale(0.9656,0.8500);color:#262626;-webkit-text-stroke:0.25px #262626">2025-06-09 21:35:07.06</div>
<div class="tx" style="left:890.00px;top:549.70px;width:300px;text-align:center;transform-origin:50% 50%;font-size:10px;transform:scale(0.9800,0.8500);font-weight:bold;color:#fff">移除排队</div>
<div class="tx" style="left:951.60px;top:549.70px;width:300px;text-align:center;transform-origin:50% 50%;font-size:10px;transform:scale(0.9800,0.8500);font-weight:bold;color:#fff">变更序号</div>
<div class="tx" style="left:1022.60px;top:549.70px;width:300px;text-align:center;transform-origin:50% 50%;font-size:10px;transform:scale(0.9800,0.8500);font-weight:bold;color:#fff">修改司机信息</div>
<div class="tx" style="left:54.31px;top:574.37px;width:300px;text-align:center;transform-origin:50% 50%;font-size:10px;transform:scale(0.9656,0.8500);color:#262626;-webkit-text-stroke:0.25px #262626">80</div>
<div class="tx" style="left:140.06px;top:574.37px;width:300px;text-align:center;transform-origin:50% 50%;font-size:10px;transform:scale(0.9656,0.8500);color:#262626;-webkit-text-stroke:0.25px #262626">当日车</div>
<div class="tx" style="left:243.22px;top:574.37px;width:300px;text-align:center;transform-origin:50% 50%;font-size:10px;transform:scale(0.9656,0.8500);color:#262626;-webkit-text-stroke:0.25px #262626">排队中</div>
<div class="tx" style="left:346.57px;top:574.37px;width:300px;text-align:center;transform-origin:50% 50%;font-size:10px;transform:scale(0.9656,0.8500);color:#262626;-webkit-text-stroke:0.25px #262626">蓄车场过夜车入口</div>
<div class="tx" style="left:570.27px;top:574.37px;width:300px;text-align:center;transform-origin:50% 50%;font-size:10px;transform:scale(0.9656,0.8500);color:#262626;-webkit-text-stroke:0.25px #262626">正常车</div>
<div class="tx" style="left:672.97px;top:574.37px;width:300px;text-align:center;transform-origin:50% 50%;font-size:10px;transform:scale(0.9656,0.8500);color:#262626;-webkit-text-stroke:0.25px #262626">2025-06-09 22:10:09.311</div>
<div class="tx" style="left:890.00px;top:578.10px;width:300px;text-align:center;transform-origin:50% 50%;font-size:10px;transform:scale(0.9800,0.8500);font-weight:bold;color:#fff">移除排队</div>
<div class="tx" style="left:951.60px;top:578.10px;width:300px;text-align:center;transform-origin:50% 50%;font-size:10px;transform:scale(0.9800,0.8500);font-weight:bold;color:#fff">变更序号</div>
<div class="tx" style="left:1022.60px;top:578.10px;width:300px;text-align:center;transform-origin:50% 50%;font-size:10px;transform:scale(0.9800,0.8500);font-weight:bold;color:#fff">修改司机信息</div>
</body></html>
